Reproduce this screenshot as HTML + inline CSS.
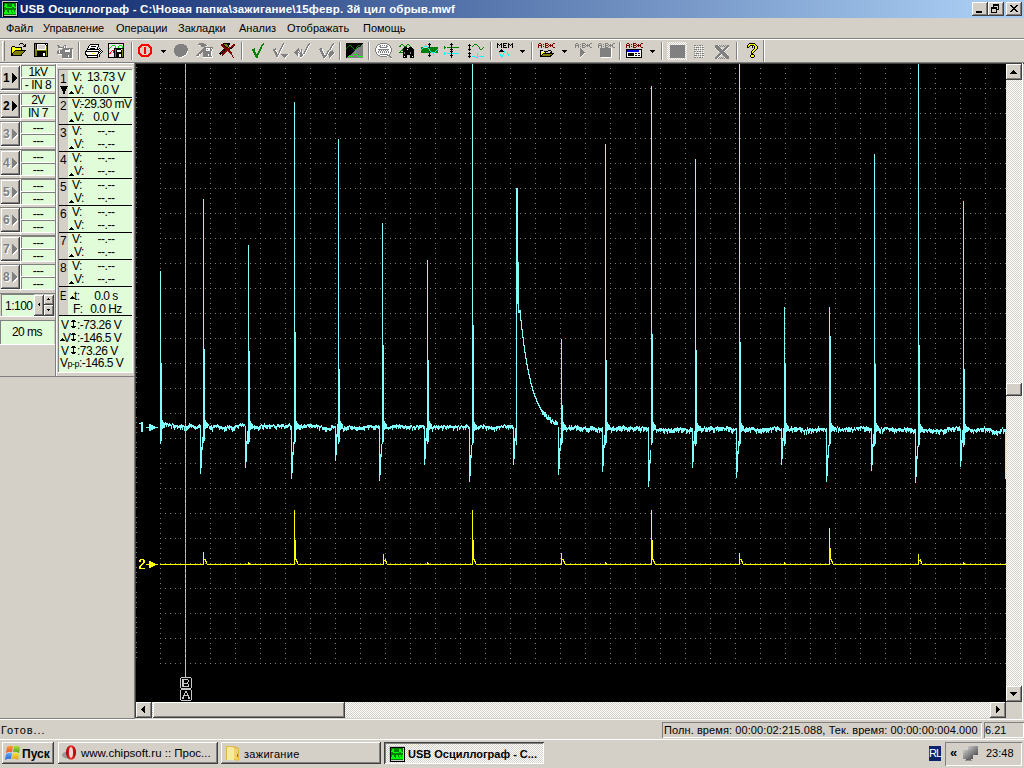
<!DOCTYPE html><html><head><meta charset="utf-8"><style>
*{box-sizing:border-box}
body{margin:0;width:1024px;height:768px;overflow:hidden;background:#d4d0c8;font-family:"Liberation Sans",sans-serif;font-size:11px;color:#000;position:relative}
.a{position:absolute}
.t{position:absolute;white-space:nowrap;line-height:13px}
.p{font-size:12px;line-height:20px;letter-spacing:-0.5px}
.rz{box-shadow:inset -1px -1px #404040,inset 1px 1px #fff,inset -2px -2px #808080,inset 2px 2px #d4d0c8;background:#d4d0c8}
.rz2{box-shadow:inset -1px -1px #404040,inset 1px 1px #d4d0c8,inset -2px -2px #808080,inset 2px 2px #fff;background:#d4d0c8}
.sk{box-shadow:inset 1px 1px #808080,inset -1px -1px #fff}
.dith{background-color:#e6e3de;background-image:repeating-conic-gradient(#fff 0 25%,#d4d0c8 0 50%);background-size:2px 2px}
</style></head><body><div class="a" style="left:0;top:0;width:1024px;height:18px;background:linear-gradient(to right,#0a246a 0px,#a6caf0 972px)"></div><svg class="a" style="left:0;top:0" width="20" height="18" shape-rendering="crispEdges"><path fill="#c8c8c8" d="M2 1h16v1h-16zM2 2h1v1h-1zM2 3h1v1h-1zM16 3h1v1h-1zM2 4h1v1h-1zM16 4h1v1h-1zM2 5h1v1h-1zM16 5h1v1h-1zM2 6h1v1h-1zM16 6h1v1h-1zM2 7h1v1h-1zM16 7h1v1h-1zM2 8h1v1h-1zM16 8h1v1h-1zM2 9h1v1h-1zM16 9h1v1h-1zM2 10h1v1h-1zM16 10h1v1h-1zM2 11h1v1h-1zM16 11h1v1h-1zM2 12h1v1h-1zM16 12h1v1h-1zM2 13h1v1h-1zM16 13h1v1h-1zM2 14h1v1h-1zM16 14h1v1h-1zM2 15h1v1h-1zM4 15h13v1h-13zM2 16h1v1h-1z"/><path fill="#000" d="M3 2h15v1h-15zM3 3h1v1h-1zM17 3h1v1h-1zM3 4h1v1h-1zM17 4h1v1h-1zM3 5h1v1h-1zM17 5h1v1h-1zM3 6h1v1h-1zM17 6h1v1h-1zM3 7h1v1h-1zM17 7h1v1h-1zM3 8h1v1h-1zM17 8h1v1h-1zM3 9h1v1h-1zM17 9h1v1h-1zM3 10h1v1h-1zM17 10h1v1h-1zM3 11h1v1h-1zM17 11h1v1h-1zM3 12h1v1h-1zM17 12h1v1h-1zM3 13h1v1h-1zM17 13h1v1h-1zM3 14h1v1h-1zM17 14h1v1h-1zM3 15h1v1h-1zM17 15h1v1h-1zM3 16h15v1h-15z"/><path fill="#008000" d="M4 3h12v1h-12zM4 4h1v1h-1zM7 4h5v1h-5zM14 4h2v1h-2zM4 5h1v1h-1zM7 5h5v1h-5zM14 5h2v1h-2zM7 6h5v1h-5zM15 6h1v1h-1zM4 7h2v1h-2zM12 7h2v1h-2zM4 8h12v1h-12zM4 9h12v1h-12zM4 10h1v1h-1zM7 10h2v1h-2zM11 10h1v1h-1zM14 10h1v1h-1zM4 11h1v1h-1zM7 11h2v1h-2zM11 11h1v1h-1zM14 11h1v1h-1zM8 12h1v1h-1zM12 12h1v1h-1zM4 14h12v1h-12z"/><path fill="#00ff00" d="M5 4h2v1h-2zM12 4h2v1h-2zM5 5h2v1h-2zM12 5h2v1h-2zM4 6h3v1h-3zM12 6h3v1h-3zM6 7h6v1h-6zM14 7h2v1h-2zM5 10h2v1h-2zM9 10h2v1h-2zM12 10h2v1h-2zM15 10h1v1h-1zM5 11h2v1h-2zM9 11h2v1h-2zM12 11h2v1h-2zM15 11h1v1h-1zM4 12h4v1h-4zM9 12h3v1h-3zM13 12h3v1h-3zM4 13h12v1h-12z"/></svg><div class="t" style="left:20px;top:3px;color:#fff;font-weight:bold;font-size:11.5px;letter-spacing:0.17px">USB Осциллограф - C:\Новая папка\зажигание\15февр. 3й цил обрыв.mwf</div><div class="a rz" style="left:972px;top:2px;width:16px;height:14px"></div><div class="a rz" style="left:988px;top:2px;width:16px;height:14px"></div><div class="a rz" style="left:1006px;top:2px;width:16px;height:14px"></div><svg class="a" style="left:0;top:0" width="1024" height="18" shape-rendering="crispEdges"><path fill="#000" d="M976 11h6v2h-6zM993 4h6v2h-6z M998 6h1v4h-1z M996 9h2v1h-2z M993 6h1v1h-1zM991 7h6v2h-6z M991 9h1v4h-1z M996 9h1v4h-1z M991 12h6v1h-6zM1010 5h2v1h-2z M1016 5h2v1h-2z M1011 6h2v1h-2z M1015 6h2v1h-2z M1012 7h4v1h-4z M1013 8h2v1h-2z M1012 9h4v1h-4z M1011 10h2v1h-2z M1015 10h2v1h-2z M1010 11h2v1h-2z M1016 11h2v1h-2z"/></svg><div class="t" style="left:6px;top:22px">Файл</div><div class="t" style="left:43px;top:22px">Управление</div><div class="t" style="left:116px;top:22px">Операции</div><div class="t" style="left:178px;top:22px">Закладки</div><div class="t" style="left:239px;top:22px">Анализ</div><div class="t" style="left:287px;top:22px">Отображать</div><div class="t" style="left:363px;top:22px">Помощь</div><div class="a" style="left:0;top:38px;width:1024px;height:1px;background:#808080"></div><div class="a" style="left:0;top:39px;width:1024px;height:1px;background:#fff"></div><svg class="a" style="left:0;top:0" width="1024" height="64" shape-rendering="crispEdges"><rect x="2" y="41" width="1" height="20" fill="#fff"/><rect x="4" y="41" width="1" height="20" fill="#808080"/><rect x="3" y="41" width="1" height="1" fill="#fff"/><path fill="#000" d="M20 43h3v1h-3zM19 44h1v1h-1zM23 44h1v1h-1zM25 44h1v1h-1zM24 45h2v1h-2zM12 46h3v1h-3zM23 46h3v1h-3zM11 47h1v1h-1zM15 47h7v1h-7zM11 48h1v1h-1zM21 48h1v1h-1zM11 49h1v1h-1zM21 49h1v1h-1zM11 50h1v1h-1zM15 50h11v1h-11zM11 51h1v1h-1zM14 51h1v1h-1zM24 51h1v1h-1zM11 52h1v1h-1zM13 52h1v1h-1zM23 52h1v1h-1zM11 53h2v1h-2zM22 53h1v1h-1zM11 54h2v1h-2zM21 54h1v1h-1zM11 55h11v1h-11z"/><path fill="#ffff00" d="M12 47h3v1h-3zM12 48h1v1h-1zM14 48h1v1h-1zM16 48h1v1h-1zM18 48h1v1h-1zM20 48h1v1h-1zM12 49h1v1h-1zM14 49h1v1h-1zM16 49h1v1h-1zM18 49h1v1h-1zM20 49h1v1h-1zM12 50h3v1h-3zM12 51h2v1h-2zM12 52h1v1h-1z"/><path fill="#fff" d="M13 48h1v1h-1zM15 48h1v1h-1zM17 48h1v1h-1zM19 48h1v1h-1zM13 49h1v1h-1zM15 49h1v1h-1zM17 49h1v1h-1zM19 49h1v1h-1z"/><path fill="#808000" d="M15 51h9v1h-9zM14 52h9v1h-9zM13 53h9v1h-9zM13 54h8v1h-8z"/><path fill="#000" d="M34 43h14v1h-14zM34 44h1v1h-1zM36 44h1v1h-1zM45 44h1v1h-1zM47 44h1v1h-1zM34 45h1v1h-1zM36 45h1v1h-1zM46 45h2v1h-2zM34 46h1v1h-1zM36 46h1v1h-1zM47 46h1v1h-1zM34 47h1v1h-1zM36 47h1v1h-1zM47 47h1v1h-1zM34 48h1v1h-1zM36 48h1v1h-1zM47 48h1v1h-1zM34 49h1v1h-1zM47 49h1v1h-1zM34 50h1v1h-1zM47 50h1v1h-1zM34 51h1v1h-1zM37 51h9v1h-9zM47 51h1v1h-1zM34 52h1v1h-1zM37 52h9v1h-9zM47 52h1v1h-1zM34 53h1v1h-1zM37 53h6v1h-6zM45 53h1v1h-1zM47 53h1v1h-1zM34 54h1v1h-1zM37 54h6v1h-6zM45 54h1v1h-1zM47 54h1v1h-1zM34 55h1v1h-1zM37 55h6v1h-6zM45 55h1v1h-1zM47 55h1v1h-1zM34 56h14v1h-14z"/><path fill="#808000" d="M35 44h1v1h-1zM35 45h1v1h-1zM35 46h1v1h-1zM46 46h1v1h-1zM35 47h1v1h-1zM46 47h1v1h-1zM35 48h1v1h-1zM46 48h1v1h-1zM35 49h2v1h-2zM46 49h1v1h-1zM35 50h12v1h-12zM35 51h2v1h-2zM46 51h1v1h-1zM35 52h2v1h-2zM46 52h1v1h-1zM35 53h2v1h-2zM46 53h1v1h-1zM35 54h2v1h-2zM46 54h1v1h-1zM35 55h2v1h-2zM46 55h1v1h-1z"/><path fill="#fff" d="M37 44h8v1h-8zM46 44h1v1h-1zM37 45h1v1h-1zM45 45h1v1h-1zM37 46h1v1h-1zM45 46h1v1h-1zM37 47h1v1h-1zM45 47h1v1h-1zM37 48h1v1h-1zM45 48h1v1h-1zM37 49h9v1h-9zM43 53h2v1h-2zM43 54h2v1h-2zM43 55h2v1h-2z"/><path fill="#d4d0c8" d="M38 45h7v1h-7zM38 46h7v1h-7zM38 47h7v1h-7zM38 48h7v1h-7z"/><path fill="#808080" d="M57 45h2v1h-2zM64 45h2v1h-2zM58 46h2v1h-2zM63 46h1v1h-1zM65 46h1v1h-1zM58 47h6v1h-6zM65 47h1v1h-1zM63 48h10v1h-10zM62 49h7v1h-7zM70 49h2v1h-2zM58 50h1v1h-1zM60 50h5v1h-5zM70 50h2v1h-2zM57 51h2v1h-2zM60 51h5v1h-5zM70 51h2v1h-2zM57 52h2v1h-2zM60 52h12v1h-12zM57 53h15v1h-15zM62 54h10v1h-10zM62 55h6v1h-6zM69 55h3v1h-3zM62 56h6v1h-6zM69 56h3v1h-3zM62 57h10v1h-10z"/><path fill="#fff" d="M64 46h1v1h-1zM66 46h1v1h-1zM64 47h1v1h-1zM66 47h1v1h-1zM59 48h3v1h-3zM69 49h1v1h-1zM72 49h1v1h-1zM65 50h5v1h-5zM72 50h1v1h-1zM59 51h1v1h-1zM65 51h5v1h-5zM72 51h1v1h-1zM59 52h1v1h-1zM72 52h1v1h-1zM72 53h1v1h-1zM58 54h4v1h-4zM72 54h1v1h-1zM68 55h1v1h-1zM72 55h1v1h-1zM68 56h1v1h-1zM72 56h1v1h-1zM72 57h1v1h-1zM63 58h10v1h-10z"/><rect x="78" y="42" width="1" height="18" fill="#808080"/><rect x="79" y="42" width="1" height="18" fill="#fff"/><path fill="#000" d="M90 44h9v1h-9zM89 45h1v1h-1zM98 45h1v1h-1zM88 46h1v1h-1zM91 46h5v1h-5zM98 46h1v1h-1zM88 47h1v1h-1zM97 47h1v1h-1zM87 48h1v1h-1zM90 48h5v1h-5zM97 48h1v1h-1zM99 48h1v1h-1zM87 49h12v1h-12zM100 49h1v1h-1zM86 50h1v1h-1zM99 50h1v1h-1zM101 50h1v1h-1zM85 51h14v1h-14zM100 51h1v1h-1zM102 51h1v1h-1zM85 52h1v1h-1zM98 52h2v1h-2zM101 52h1v1h-1zM85 53h1v1h-1zM98 53h1v1h-1zM100 53h1v1h-1zM85 54h2v1h-2zM97 54h1v1h-1zM99 54h1v1h-1zM86 55h12v1h-12zM99 55h1v1h-1zM87 56h1v1h-1zM97 56h1v1h-1zM99 56h1v1h-1zM87 57h11v1h-11z"/><path fill="#fff" d="M90 45h8v1h-8zM89 46h2v1h-2zM96 46h2v1h-2zM89 47h8v1h-8zM88 48h2v1h-2zM95 48h2v1h-2zM98 48h1v1h-1zM99 49h1v1h-1zM101 49h1v1h-1zM87 50h12v1h-12zM100 50h1v1h-1zM99 51h1v1h-1zM101 51h1v1h-1zM86 52h12v1h-12zM100 52h1v1h-1zM86 53h6v1h-6zM95 53h3v1h-3zM99 53h1v1h-1zM87 54h10v1h-10zM98 54h1v1h-1zM98 55h1v1h-1zM88 56h9v1h-9z"/><path fill="#ffff00" d="M92 53h3v1h-3z"/><path fill="#000" d="M108 43h16v1h-16zM108 44h1v1h-1zM123 44h1v1h-1zM108 45h1v1h-1zM123 45h1v1h-1zM108 46h1v1h-1zM123 46h1v1h-1zM108 47h1v1h-1zM123 47h1v1h-1zM108 48h1v1h-1zM114 48h10v1h-10zM108 49h1v1h-1zM114 49h1v1h-1zM116 49h5v1h-5zM123 49h1v1h-1zM108 50h1v1h-1zM114 50h1v1h-1zM116 50h1v1h-1zM121 50h1v1h-1zM123 50h1v1h-1zM108 51h1v1h-1zM114 51h1v1h-1zM116 51h1v1h-1zM121 51h1v1h-1zM123 51h1v1h-1zM108 52h1v1h-1zM114 52h1v1h-1zM116 52h6v1h-6zM123 52h1v1h-1zM108 53h1v1h-1zM114 53h1v1h-1zM116 53h6v1h-6zM123 53h1v1h-1zM108 54h1v1h-1zM114 54h1v1h-1zM116 54h3v1h-3zM121 54h1v1h-1zM123 54h1v1h-1zM108 55h1v1h-1zM114 55h1v1h-1zM116 55h3v1h-3zM121 55h1v1h-1zM123 55h1v1h-1zM108 56h1v1h-1zM114 56h1v1h-1zM116 56h3v1h-3zM121 56h1v1h-1zM123 56h1v1h-1zM108 57h16v1h-16z"/><path fill="#f0e6f0" d="M109 44h14v1h-14zM109 45h3v1h-3zM115 45h4v1h-4zM122 45h1v1h-1zM109 46h2v1h-2zM112 46h3v1h-3zM116 46h2v1h-2zM119 46h3v1h-3zM109 47h1v1h-1zM111 47h4v1h-4zM116 47h2v1h-2zM119 47h3v1h-3zM110 48h4v1h-4zM109 49h5v1h-5zM109 50h3v1h-3zM109 51h2v1h-2zM112 51h1v1h-1zM109 52h1v1h-1zM111 52h2v1h-2zM111 53h3v1h-3zM109 54h5v1h-5zM109 55h5v1h-5zM109 56h5v1h-5z"/><path fill="#00e000" d="M112 45h3v1h-3zM119 45h3v1h-3zM111 46h1v1h-1zM115 46h1v1h-1zM118 46h1v1h-1zM122 46h1v1h-1zM110 47h1v1h-1zM115 47h1v1h-1zM118 47h1v1h-1zM122 47h1v1h-1zM109 48h1v1h-1z"/><path fill="#808000" d="M115 49h1v1h-1zM122 49h1v1h-1zM115 50h1v1h-1zM122 50h1v1h-1zM115 51h1v1h-1zM122 51h1v1h-1zM115 52h1v1h-1zM122 52h1v1h-1zM115 53h1v1h-1zM122 53h1v1h-1zM115 54h1v1h-1zM122 54h1v1h-1zM115 55h1v1h-1zM122 55h1v1h-1zM115 56h1v1h-1zM122 56h1v1h-1z"/><path fill="#fff" d="M121 49h1v1h-1zM117 50h4v1h-4zM117 51h4v1h-4zM119 54h2v1h-2zM119 55h2v1h-2zM119 56h2v1h-2z"/><path fill="#ff0000" d="M112 50h2v1h-2zM113 51h1v1h-1zM113 52h1v1h-1z"/><path fill="#ff0000" d="M111 51h1v1h-1zM110 52h1v1h-1zM109 53h2v1h-2z"/><rect x="131" y="42" width="1" height="18" fill="#808080"/><rect x="132" y="42" width="1" height="18" fill="#fff"/><path fill="#ff0000" d="M141 44h8v1h-8zM140 45h10v1h-10zM139 46h3v1h-3zM148 46h3v1h-3zM138 47h3v1h-3zM144 47h2v1h-2zM149 47h3v1h-3zM138 48h2v1h-2zM144 48h2v1h-2zM150 48h2v1h-2zM138 49h2v1h-2zM144 49h2v1h-2zM150 49h2v1h-2zM138 50h2v1h-2zM144 50h2v1h-2zM150 50h2v1h-2zM138 51h2v1h-2zM144 51h2v1h-2zM150 51h2v1h-2zM138 52h2v1h-2zM144 52h2v1h-2zM150 52h2v1h-2zM138 53h3v1h-3zM144 53h2v1h-2zM149 53h3v1h-3zM139 54h3v1h-3zM148 54h3v1h-3zM140 55h10v1h-10zM141 56h8v1h-8z"/><path fill="#000" d="M161 50h5v1h-5z M162 51h3v1h-3z M163 52h1v1h-1z"/><path fill="#808080" d="M178 44h6v1h-6zM176 45h10v1h-10zM175 46h12v1h-12zM175 47h12v1h-12zM174 48h14v1h-14zM174 49h14v1h-14zM174 50h14v1h-14zM174 51h13v1h-13zM174 52h13v1h-13zM175 53h11v1h-11zM175 54h11v1h-11zM176 55h8v1h-8zM178 56h4v1h-4z"/><path fill="#fff" d="M187 51h1v1h-1zM187 52h1v1h-1zM186 53h1v1h-1zM186 54h1v1h-1zM184 55h2v1h-2zM182 56h2v1h-2zM180 57h2v1h-2z"/><path fill="#808080" d="M199 43h5v1h-5zM198 44h8v1h-8zM201 45h6v1h-6zM201 46h4v1h-4zM204 47h9v1h-9zM203 48h3v1h-3zM210 48h1v1h-1zM212 48h1v1h-1zM202 49h4v1h-4zM207 49h1v1h-1zM210 49h2v1h-2zM201 50h5v1h-5zM210 50h2v1h-2zM200 51h11v1h-11zM199 52h3v1h-3zM203 52h8v1h-8zM198 53h3v1h-3zM203 53h8v1h-8zM197 54h2v1h-2zM203 54h5v1h-5zM209 54h2v1h-2zM196 55h3v1h-3zM203 55h5v1h-5zM209 55h2v1h-2zM203 56h9v1h-9z"/><path fill="#fff" d="M199 45h1v1h-1zM207 45h1v1h-1zM206 46h1v1h-1zM206 48h4v1h-4zM211 48h1v1h-1zM206 49h1v1h-1zM208 49h2v1h-2zM212 49h1v1h-1zM206 50h4v1h-4zM212 50h1v1h-1zM211 51h1v1h-1zM211 52h1v1h-1zM211 53h1v1h-1zM199 54h1v1h-1zM208 54h1v1h-1zM211 54h1v1h-1zM199 55h1v1h-1zM208 55h1v1h-1zM211 55h1v1h-1zM197 56h2v1h-2zM212 56h1v1h-1zM203 57h10v1h-10z"/><path fill="#000" d="M223 43h7v1h-7zM223 44h1v1h-1zM227 44h3v1h-3zM224 45h1v1h-1zM228 45h1v1h-1zM225 46h1v1h-1zM228 46h1v1h-1zM226 47h2v1h-2zM232 47h1v1h-1zM230 48h2v1h-2zM223 49h2v1h-2zM229 49h1v1h-1zM222 50h1v1h-1zM224 50h1v1h-1zM221 51h1v1h-1zM223 51h1v1h-1zM220 52h1v1h-1zM222 52h1v1h-1zM219 53h3v1h-3zM220 54h1v1h-1z"/><path fill="#800000" d="M221 44h2v1h-2zM233 44h2v1h-2zM221 45h3v1h-3zM232 45h3v1h-3zM222 46h3v1h-3zM231 46h3v1h-3zM223 47h3v1h-3zM229 47h3v1h-3zM224 48h6v1h-6zM225 49h4v1h-4zM223 50h1v1h-1zM225 50h5v1h-5zM222 51h1v1h-1zM224 51h3v1h-3zM228 51h3v1h-3zM221 52h1v1h-1zM223 52h3v1h-3zM229 52h3v1h-3zM222 53h3v1h-3zM230 53h2v1h-2zM222 54h2v1h-2zM231 54h1v1h-1zM222 55h1v1h-1zM232 55h1v1h-1zM232 56h1v1h-1zM233 57h1v1h-1z"/><path fill="#808000" d="M224 44h3v1h-3zM225 45h3v1h-3zM226 46h2v1h-2z"/><path fill="#c0c000" d="M228 47h1v1h-1z"/><rect x="241" y="42" width="1" height="18" fill="#808080"/><rect x="242" y="42" width="1" height="18" fill="#fff"/><path fill="#008000" d="M263 43h1v1h-1zM262 44h2v1h-2zM261 45h2v1h-2zM261 46h1v1h-1zM260 47h2v1h-2zM254 48h1v1h-1zM260 48h2v1h-2zM252 49h3v1h-3zM259 49h2v1h-2zM252 50h3v1h-3zM259 50h2v1h-2zM253 51h2v1h-2zM258 51h2v1h-2zM253 52h3v1h-3zM258 52h2v1h-2zM254 53h2v1h-2zM257 53h2v1h-2zM254 54h5v1h-5zM255 55h3v1h-3zM255 56h3v1h-3zM256 57h2v1h-2z"/><path fill="#808080" d="M283 43h1v1h-1zM282 44h2v1h-2zM282 45h1v1h-1zM281 46h2v1h-2zM281 47h1v1h-1zM275 48h1v1h-1zM280 48h2v1h-2zM273 49h3v1h-3zM280 49h1v1h-1zM273 50h2v1h-2zM279 50h2v1h-2zM274 51h2v1h-2zM279 51h1v1h-1zM274 52h3v1h-3zM279 52h1v1h-1zM275 53h2v1h-2zM278 53h1v1h-1zM275 54h4v1h-4zM281 54h7v1h-7zM276 55h2v1h-2zM282 55h5v1h-5zM276 56h2v1h-2zM283 56h3v1h-3zM284 57h1v1h-1z"/><path fill="#fff" d="M284 44h1v1h-1zM283 45h1v1h-1zM283 46h1v1h-1zM282 47h1v1h-1zM282 48h1v1h-1zM281 49h1v1h-1zM275 50h2v1h-2zM281 50h1v1h-1zM276 51h1v1h-1zM280 51h1v1h-1zM277 52h1v1h-1zM280 52h1v1h-1zM277 53h1v1h-1zM279 53h1v1h-1zM279 54h1v1h-1zM288 54h1v1h-1zM278 55h1v1h-1zM287 55h1v1h-1zM278 56h1v1h-1zM286 56h1v1h-1zM277 57h1v1h-1zM285 57h1v1h-1zM285 58h1v1h-1z"/><path fill="#808080" d="M309 43h1v1h-1zM308 44h2v1h-2zM307 45h2v1h-2zM307 46h1v1h-1zM306 47h2v1h-2zM298 48h1v1h-1zM306 48h1v1h-1zM297 49h2v1h-2zM301 49h1v1h-1zM305 49h2v1h-2zM296 50h4v1h-4zM301 50h1v1h-1zM305 50h1v1h-1zM295 51h3v1h-3zM299 51h1v1h-1zM301 51h1v1h-1zM304 51h2v1h-2zM294 52h5v1h-5zM300 52h2v1h-2zM304 52h1v1h-1zM295 53h3v1h-3zM299 53h3v1h-3zM303 53h2v1h-2zM296 54h2v1h-2zM300 54h3v1h-3zM297 55h1v1h-1zM300 55h3v1h-3zM300 56h2v1h-2z"/><path fill="#fff" d="M310 44h1v1h-1zM309 45h1v1h-1zM308 46h1v1h-1zM308 47h1v1h-1zM307 48h1v1h-1zM307 49h1v1h-1zM300 50h1v1h-1zM306 50h1v1h-1zM298 51h1v1h-1zM300 51h1v1h-1zM302 51h1v1h-1zM306 51h1v1h-1zM299 52h1v1h-1zM302 52h1v1h-1zM305 52h1v1h-1zM298 53h1v1h-1zM302 53h1v1h-1zM305 53h1v1h-1zM298 54h2v1h-2zM303 54h2v1h-2zM298 55h1v1h-1zM303 55h1v1h-1zM298 56h1v1h-1zM302 56h1v1h-1zM300 57h2v1h-2z"/><path fill="#808080" d="M333 43h1v1h-1zM332 44h2v1h-2zM331 45h2v1h-2zM331 46h1v1h-1zM330 47h2v1h-2zM320 48h2v1h-2zM330 48h1v1h-1zM319 49h3v1h-3zM329 49h2v1h-2zM320 50h2v1h-2zM328 50h1v1h-1zM332 50h1v1h-1zM320 51h3v1h-3zM327 51h2v1h-2zM330 51h3v1h-3zM321 52h2v1h-2zM327 52h1v1h-1zM329 52h5v1h-5zM321 53h3v1h-3zM326 53h2v1h-2zM329 53h5v1h-5zM322 54h2v1h-2zM326 54h1v1h-1zM328 54h5v1h-5zM322 55h5v1h-5zM329 55h3v1h-3zM323 56h3v1h-3zM329 56h2v1h-2zM323 57h2v1h-2zM329 57h1v1h-1z"/><path fill="#fff" d="M334 44h1v1h-1zM333 45h1v1h-1zM332 46h1v1h-1zM332 47h1v1h-1zM331 48h1v1h-1zM322 49h1v1h-1zM331 49h1v1h-1zM322 50h1v1h-1zM330 50h1v1h-1zM323 51h1v1h-1zM329 51h1v1h-1zM323 52h1v1h-1zM328 52h1v1h-1zM324 53h1v1h-1zM328 53h1v1h-1zM334 53h1v1h-1zM324 54h1v1h-1zM327 54h1v1h-1zM333 54h1v1h-1zM327 55h1v1h-1zM332 55h1v1h-1zM326 56h1v1h-1zM331 56h1v1h-1zM325 57h1v1h-1zM330 57h1v1h-1zM324 58h1v1h-1zM330 58h1v1h-1z"/><rect x="339" y="42" width="1" height="18" fill="#808080"/><rect x="340" y="42" width="1" height="18" fill="#fff"/><path fill="#000" d="M346 43h17v1h-17zM346 44h16v1h-16zM346 45h15v1h-15zM346 46h14v1h-14zM346 47h12v1h-12zM346 48h11v1h-11zM346 49h10v1h-10zM346 50h9v1h-9zM346 51h8v1h-8zM346 52h7v1h-7zM346 53h6v1h-6zM346 54h5v1h-5zM346 55h3v1h-3zM346 56h2v1h-2zM346 57h1v1h-1z"/><path fill="#808080" d="M362 44h1v1h-1zM361 45h2v1h-2zM360 46h3v1h-3zM358 47h5v1h-5zM357 48h6v1h-6zM356 49h7v1h-7zM355 50h8v1h-8zM354 51h9v1h-9zM353 52h10v1h-10zM352 53h11v1h-11zM351 54h12v1h-12zM349 55h14v1h-14zM348 56h15v1h-15zM347 57h16v1h-16z"/><path fill="#008000" d="M349 45h2v1h-2zM358 45h2v1h-2zM348 46h1v1h-1zM351 46h1v1h-1zM357 46h1v1h-1zM360 46h1v1h-1zM347 47h1v1h-1zM352 47h1v1h-1zM356 47h1v1h-1zM346 48h1v1h-1zM353 48h1v1h-1zM356 48h1v1h-1zM354 49h2v1h-2z"/><path fill="#00ff00" d="M355 50h1v1h-1zM355 51h1v1h-1zM355 52h1v1h-1zM355 53h1v1h-1zM354 54h1v1h-1zM356 54h1v1h-1zM353 55h1v1h-1zM357 55h1v1h-1zM348 56h5v1h-5zM358 56h5v1h-5z"/><rect x="368" y="42" width="1" height="18" fill="#808080"/><rect x="369" y="42" width="1" height="18" fill="#fff"/><path fill="#808080" d="M380 43h7v1h-7zM378 44h2v1h-2zM387 44h2v1h-2zM377 45h1v1h-1zM380 45h1v1h-1zM382 45h1v1h-1zM384 45h1v1h-1zM386 45h1v1h-1zM389 45h1v1h-1zM376 46h1v1h-1zM379 46h2v1h-2zM386 46h2v1h-2zM390 46h1v1h-1zM376 47h1v1h-1zM380 47h7v1h-7zM390 47h1v1h-1zM375 48h1v1h-1zM391 48h1v1h-1zM375 49h1v1h-1zM378 49h11v1h-11zM391 49h1v1h-1zM375 50h1v1h-1zM379 50h1v1h-1zM381 50h1v1h-1zM383 50h1v1h-1zM385 50h1v1h-1zM387 50h1v1h-1zM391 50h1v1h-1zM375 51h1v1h-1zM378 51h1v1h-1zM380 51h1v1h-1zM382 51h1v1h-1zM384 51h1v1h-1zM386 51h1v1h-1zM388 51h1v1h-1zM391 51h1v1h-1zM376 52h1v1h-1zM378 52h1v1h-1zM380 52h1v1h-1zM382 52h1v1h-1zM384 52h1v1h-1zM386 52h1v1h-1zM388 52h1v1h-1zM390 52h1v1h-1zM376 53h1v1h-1zM390 53h1v1h-1zM377 54h1v1h-1zM380 54h8v1h-8zM389 54h1v1h-1zM378 55h2v1h-2zM387 55h3v1h-3zM380 56h7v1h-7zM389 56h2v1h-2zM390 57h2v1h-2z"/><path fill="#fff" d="M380 44h7v1h-7zM378 45h2v1h-2zM381 45h1v1h-1zM383 45h1v1h-1zM385 45h1v1h-1zM387 45h2v1h-2zM377 46h2v1h-2zM381 46h5v1h-5zM388 46h2v1h-2zM377 47h3v1h-3zM387 47h3v1h-3zM376 48h15v1h-15zM376 49h2v1h-2zM389 49h2v1h-2zM376 50h3v1h-3zM380 50h1v1h-1zM382 50h1v1h-1zM384 50h1v1h-1zM386 50h1v1h-1zM388 50h3v1h-3zM376 51h2v1h-2zM379 51h1v1h-1zM381 51h1v1h-1zM383 51h1v1h-1zM385 51h1v1h-1zM387 51h1v1h-1zM389 51h2v1h-2zM377 52h1v1h-1zM379 52h1v1h-1zM381 52h1v1h-1zM383 52h1v1h-1zM385 52h1v1h-1zM387 52h1v1h-1zM389 52h1v1h-1zM377 53h13v1h-13zM378 54h2v1h-2zM388 54h1v1h-1zM380 55h7v1h-7zM387 56h1v1h-1zM391 58h1v1h-1z"/><path fill="#008000" d="M401 44h2v1h-2zM407 44h2v1h-2zM400 45h1v1h-1zM403 45h1v1h-1zM406 45h1v1h-1zM409 45h1v1h-1zM399 46h2v1h-2zM404 46h3v1h-3zM410 46h1v1h-1zM402 49h1v1h-1zM401 50h2v1h-2zM400 51h1v1h-1zM399 52h4v1h-4z"/><path fill="#000" d="M404 47h3v1h-3zM409 47h3v1h-3zM403 48h10v1h-10zM403 49h4v1h-4zM408 49h6v1h-6zM403 50h11v1h-11zM403 51h11v1h-11zM403 52h1v1h-1zM405 52h5v1h-5zM411 52h3v1h-3zM403 53h1v1h-1zM405 53h5v1h-5zM411 53h3v1h-3zM403 54h11v1h-11zM403 55h4v1h-4zM410 55h4v1h-4zM403 56h1v1h-1zM405 56h2v1h-2zM410 56h2v1h-2zM413 56h1v1h-1zM403 57h4v1h-4zM410 57h4v1h-4z"/><path fill="#fff" d="M407 49h1v1h-1zM404 56h1v1h-1zM412 56h1v1h-1z"/><path fill="#808080" d="M404 52h1v1h-1zM410 52h1v1h-1zM404 53h1v1h-1zM410 53h1v1h-1z"/><path fill="#000" d="M429 43h1v1h-1zM428 44h3v1h-3zM429 45h1v1h-1zM429 46h1v1h-1zM429 47h1v1h-1zM429 51h1v1h-1zM429 53h1v1h-1zM429 54h1v1h-1zM428 55h3v1h-3zM429 56h1v1h-1z"/><path fill="#00ffff" d="M425 44h1v1h-1zM425 45h1v1h-1zM424 46h1v1h-1zM426 46h1v1h-1zM423 47h1v1h-1zM427 47h1v1h-1zM422 48h1v1h-1zM428 48h1v1h-1zM421 49h1v1h-1zM429 49h1v1h-1zM437 49h1v1h-1zM429 50h1v1h-1zM436 50h1v1h-1zM430 51h1v1h-1zM435 51h1v1h-1zM431 52h4v1h-4zM433 53h1v1h-1zM433 54h1v1h-1z"/><path fill="#008000" d="M421 47h2v1h-2zM428 47h1v1h-1zM430 47h8v1h-8zM421 48h1v1h-1zM423 48h5v1h-5zM429 48h9v1h-9zM422 49h7v1h-7zM430 49h7v1h-7zM421 50h8v1h-8zM430 50h6v1h-6zM437 50h1v1h-1zM421 51h8v1h-8zM431 51h4v1h-4zM436 51h2v1h-2zM421 52h10v1h-10zM435 52h3v1h-3z"/><path fill="#000" d="M451 43h1v1h-1zM450 44h3v1h-3zM451 45h1v1h-1zM451 46h1v1h-1zM451 47h1v1h-1zM451 48h1v1h-1zM450 49h3v1h-3zM451 50h1v1h-1zM450 51h3v1h-3zM451 52h1v1h-1zM451 53h1v1h-1zM451 54h1v1h-1zM450 55h3v1h-3zM451 56h1v1h-1zM451 57h1v1h-1z"/><path fill="#008000" d="M444 46h1v1h-1zM444 47h2v1h-2zM447 47h4v1h-4zM452 47h7v1h-7zM444 48h1v1h-1z"/><path fill="#00ffff" d="M444 52h1v1h-1zM444 53h2v1h-2zM447 53h4v1h-4zM452 53h7v1h-7zM444 54h1v1h-1z"/><path fill="#000" d="M469 44h1v1h-1zM468 45h3v1h-3zM469 46h1v1h-1zM469 47h1v1h-1zM469 48h1v1h-1zM468 49h3v1h-3zM469 50h1v1h-1zM469 52h1v1h-1zM468 53h3v1h-3zM469 54h1v1h-1zM469 55h1v1h-1zM468 56h3v1h-3zM469 57h1v1h-1z"/><path fill="#008000" d="M474 44h3v1h-3zM473 45h1v1h-1zM477 45h1v1h-1zM472 46h1v1h-1zM478 46h1v1h-1zM479 47h1v1h-1zM483 47h1v1h-1zM479 48h1v1h-1zM482 48h1v1h-1zM480 49h2v1h-2z"/><path fill="#00ffff" d="M477 53h1v1h-1zM477 54h1v1h-1zM477 55h1v1h-1zM472 56h3v1h-3zM477 56h1v1h-1zM479 56h5v1h-5zM475 57h3v1h-3z"/><rect x="490" y="42" width="1" height="18" fill="#808080"/><rect x="491" y="42" width="1" height="18" fill="#fff"/><path fill="#000" d="M497 43h1v1h-1zM501 43h1v1h-1zM503 43h4v1h-4zM508 43h1v1h-1zM512 43h1v1h-1zM497 44h2v1h-2zM500 44h2v1h-2zM503 44h1v1h-1zM508 44h2v1h-2zM511 44h2v1h-2zM497 45h1v1h-1zM499 45h1v1h-1zM501 45h1v1h-1zM503 45h3v1h-3zM508 45h1v1h-1zM510 45h1v1h-1zM512 45h1v1h-1zM497 46h1v1h-1zM501 46h1v1h-1zM503 46h1v1h-1zM508 46h1v1h-1zM512 46h1v1h-1zM497 47h1v1h-1zM501 47h1v1h-1zM503 47h4v1h-4zM508 47h1v1h-1zM512 47h1v1h-1zM501 49h1v1h-1zM500 50h3v1h-3zM499 51h5v1h-5z"/><path fill="#00ffff" d="M504 51h1v1h-1zM499 52h1v1h-1zM504 52h1v1h-1zM507 52h1v1h-1zM499 53h1v1h-1zM503 53h1v1h-1zM507 53h1v1h-1zM500 54h1v1h-1zM503 54h1v1h-1zM508 54h1v1h-1zM500 55h1v1h-1zM502 55h1v1h-1zM508 55h1v1h-1zM501 56h2v1h-2zM501 57h1v1h-1z"/><path fill="#000" d="M520 50h5v1h-5z M521 51h3v1h-3z M522 52h1v1h-1z"/><rect x="531" y="42" width="1" height="18" fill="#808080"/><rect x="532" y="42" width="1" height="18" fill="#fff"/><path fill="#800000" d="M539 43h2v1h-2zM545 43h3v1h-3zM553 43h2v1h-2zM538 44h1v1h-1zM541 44h1v1h-1zM543 44h1v1h-1zM545 44h1v1h-1zM548 44h1v1h-1zM550 44h1v1h-1zM552 44h1v1h-1zM538 45h4v1h-4zM545 45h3v1h-3zM549 45h4v1h-4zM538 46h1v1h-1zM541 46h1v1h-1zM543 46h1v1h-1zM545 46h1v1h-1zM548 46h1v1h-1zM550 46h1v1h-1zM552 46h1v1h-1zM538 47h1v1h-1zM541 47h1v1h-1zM545 47h3v1h-3zM553 47h2v1h-2z"/><path fill="#000" d="M540 50h3v1h-3zM548 50h3v1h-3zM540 51h1v1h-1zM544 51h4v1h-4zM551 51h1v1h-1zM540 52h1v1h-1zM545 52h1v1h-1zM550 52h2v1h-2zM540 53h1v1h-1zM543 53h11v1h-11zM540 54h1v1h-1zM542 54h1v1h-1zM552 54h1v1h-1zM540 55h2v1h-2zM550 55h2v1h-2zM540 56h11v1h-11z"/><path fill="#ffff00" d="M541 51h1v1h-1zM543 51h1v1h-1zM542 52h1v1h-1zM544 52h1v1h-1zM541 53h2v1h-2zM541 54h1v1h-1z"/><path fill="#fff" d="M542 51h1v1h-1zM541 52h1v1h-1zM543 52h1v1h-1z"/><path fill="#808000" d="M543 54h9v1h-9zM542 55h8v1h-8z"/><path fill="#000" d="M562 50h5v1h-5z M563 51h3v1h-3z M564 52h1v1h-1z"/><path fill="#808080" d="M576 43h2v1h-2zM582 43h3v1h-3zM590 43h2v1h-2zM575 44h1v1h-1zM578 44h1v1h-1zM580 44h1v1h-1zM582 44h1v1h-1zM585 44h1v1h-1zM587 44h1v1h-1zM589 44h1v1h-1zM575 45h4v1h-4zM582 45h3v1h-3zM586 45h4v1h-4zM575 46h1v1h-1zM578 46h1v1h-1zM580 46h1v1h-1zM582 46h1v1h-1zM585 46h1v1h-1zM587 46h1v1h-1zM589 46h1v1h-1zM575 47h1v1h-1zM578 47h1v1h-1zM582 47h3v1h-3zM590 47h2v1h-2z"/><path fill="#808080" d="M580 48h1v1h-1zM580 49h2v1h-2zM580 50h3v1h-3zM580 51h4v1h-4zM580 52h5v1h-5zM580 53h4v1h-4zM580 54h3v1h-3zM580 55h2v1h-2zM580 56h1v1h-1z"/><path fill="#fff" d="M584 53h1v1h-1zM583 54h1v1h-1zM582 55h1v1h-1zM581 56h1v1h-1zM580 57h1v1h-1z"/><path fill="#808080" d="M599 43h2v1h-2zM605 43h3v1h-3zM613 43h2v1h-2zM598 44h1v1h-1zM601 44h1v1h-1zM603 44h1v1h-1zM605 44h1v1h-1zM608 44h1v1h-1zM610 44h1v1h-1zM612 44h1v1h-1zM598 45h4v1h-4zM605 45h3v1h-3zM609 45h4v1h-4zM598 46h1v1h-1zM601 46h1v1h-1zM603 46h1v1h-1zM605 46h1v1h-1zM608 46h1v1h-1zM610 46h1v1h-1zM612 46h1v1h-1zM598 47h1v1h-1zM601 47h1v1h-1zM605 47h3v1h-3zM613 47h2v1h-2z"/><rect x="600" y="48" width="11" height="9" fill="#808080"/><rect x="601" y="57" width="11" height="1" fill="#fff"/><rect x="611" y="48" width="1" height="9" fill="#fff"/><rect x="619" y="42" width="1" height="18" fill="#808080"/><rect x="620" y="42" width="1" height="18" fill="#fff"/><path fill="#800000" d="M627 43h2v1h-2zM633 43h3v1h-3zM641 43h2v1h-2zM626 44h1v1h-1zM629 44h1v1h-1zM631 44h1v1h-1zM633 44h1v1h-1zM636 44h1v1h-1zM638 44h1v1h-1zM640 44h1v1h-1zM626 45h4v1h-4zM633 45h3v1h-3zM637 45h4v1h-4zM626 46h1v1h-1zM629 46h1v1h-1zM631 46h1v1h-1zM633 46h1v1h-1zM636 46h1v1h-1zM638 46h1v1h-1zM640 46h1v1h-1zM626 47h1v1h-1zM629 47h1v1h-1zM633 47h3v1h-3zM641 47h2v1h-2z"/><path fill="#000" d="M626 49h16v1h-16zM626 50h1v1h-1zM641 50h1v1h-1zM626 51h1v1h-1zM641 51h1v1h-1zM626 52h1v1h-1zM641 52h1v1h-1zM626 53h1v1h-1zM628 53h6v1h-6zM635 53h2v1h-2zM638 53h2v1h-2zM641 53h1v1h-1zM626 54h1v1h-1zM628 54h6v1h-6zM641 54h1v1h-1zM626 55h1v1h-1zM628 55h6v1h-6zM635 55h2v1h-2zM638 55h2v1h-2zM641 55h1v1h-1zM626 56h1v1h-1zM641 56h1v1h-1zM626 57h16v1h-16z"/><path fill="#0000ff" d="M627 50h12v1h-12zM627 51h12v1h-12z"/><path fill="#fffff0" d="M639 50h2v1h-2zM639 51h2v1h-2zM627 52h14v1h-14zM627 53h1v1h-1zM634 53h1v1h-1zM637 53h1v1h-1zM640 53h1v1h-1zM627 54h1v1h-1zM634 54h7v1h-7zM627 55h1v1h-1zM634 55h1v1h-1zM637 55h1v1h-1zM640 55h1v1h-1zM627 56h14v1h-14z"/><path fill="#000" d="M650 50h5v1h-5z M651 51h3v1h-3z M652 52h1v1h-1z"/><rect x="661" y="42" width="1" height="18" fill="#808080"/><rect x="662" y="42" width="1" height="18" fill="#fff"/><path fill="#fff" d="M667 42h1v1h-1zM669 42h1v1h-1zM671 42h1v1h-1zM673 42h1v1h-1zM675 42h1v1h-1zM677 42h1v1h-1zM679 42h1v1h-1zM681 42h1v1h-1zM683 42h1v1h-1zM685 42h1v1h-1zM668 43h1v1h-1zM670 43h1v1h-1zM672 43h1v1h-1zM674 43h1v1h-1zM676 43h1v1h-1zM678 43h1v1h-1zM680 43h1v1h-1zM682 43h1v1h-1zM684 43h1v1h-1zM686 43h1v1h-1zM667 44h1v1h-1zM669 44h1v1h-1zM671 44h1v1h-1zM673 44h1v1h-1zM675 44h1v1h-1zM677 44h1v1h-1zM679 44h1v1h-1zM681 44h1v1h-1zM683 44h1v1h-1zM685 44h1v1h-1zM668 45h1v1h-1zM686 45h1v1h-1zM667 46h1v1h-1zM669 46h1v1h-1zM685 46h1v1h-1zM668 47h1v1h-1zM686 47h1v1h-1zM667 48h1v1h-1zM669 48h1v1h-1zM685 48h1v1h-1zM668 49h1v1h-1zM686 49h1v1h-1zM667 50h1v1h-1zM669 50h1v1h-1zM685 50h1v1h-1zM668 51h1v1h-1zM686 51h1v1h-1zM667 52h1v1h-1zM669 52h1v1h-1zM685 52h1v1h-1zM668 53h1v1h-1zM686 53h1v1h-1zM667 54h1v1h-1zM669 54h1v1h-1zM685 54h1v1h-1zM668 55h1v1h-1zM686 55h1v1h-1zM667 56h1v1h-1zM669 56h1v1h-1zM685 56h1v1h-1zM668 57h1v1h-1zM686 57h1v1h-1zM667 58h1v1h-1zM669 58h1v1h-1zM671 58h1v1h-1zM673 58h1v1h-1zM675 58h1v1h-1zM677 58h1v1h-1zM679 58h1v1h-1zM681 58h1v1h-1zM683 58h1v1h-1zM685 58h1v1h-1zM668 59h1v1h-1zM670 59h1v1h-1zM672 59h1v1h-1zM674 59h1v1h-1zM676 59h1v1h-1zM678 59h1v1h-1zM680 59h1v1h-1zM682 59h1v1h-1zM684 59h1v1h-1zM686 59h1v1h-1z"/><path fill="#808080" d="M670 45h15v1h-15zM670 46h15v1h-15zM670 47h15v1h-15zM670 48h15v1h-15zM670 49h15v1h-15zM670 50h15v1h-15zM670 51h15v1h-15zM670 52h15v1h-15zM670 53h15v1h-15zM670 54h15v1h-15zM670 55h15v1h-15zM670 56h15v1h-15zM670 57h15v1h-15z"/><path fill="#808080" d="M694 45h2v1h-2zM697 45h1v1h-1zM699 45h2v1h-2zM702 45h1v1h-1zM694 47h1v1h-1zM696 47h3v1h-3zM700 47h1v1h-1zM702 47h2v1h-2zM694 49h3v1h-3zM698 49h1v1h-1zM700 49h1v1h-1zM702 49h2v1h-2zM694 51h2v1h-2zM697 51h1v1h-1zM699 51h2v1h-2zM702 51h1v1h-1zM694 53h1v1h-1zM696 53h3v1h-3zM700 53h1v1h-1zM702 53h2v1h-2zM694 55h3v1h-3zM698 55h1v1h-1zM700 55h1v1h-1zM702 55h2v1h-2zM694 57h2v1h-2zM697 57h1v1h-1zM699 57h2v1h-2zM702 57h1v1h-1z"/><path fill="#fff" d="M695 46h1v1h-1zM697 46h1v1h-1zM699 46h1v1h-1zM701 46h1v1h-1zM703 46h1v1h-1zM695 48h1v1h-1zM697 48h1v1h-1zM699 48h1v1h-1zM701 48h1v1h-1zM703 48h1v1h-1zM695 50h1v1h-1zM697 50h1v1h-1zM699 50h1v1h-1zM701 50h1v1h-1zM703 50h1v1h-1zM695 52h1v1h-1zM697 52h1v1h-1zM699 52h1v1h-1zM701 52h1v1h-1zM703 52h1v1h-1zM695 54h1v1h-1zM697 54h1v1h-1zM699 54h1v1h-1zM701 54h1v1h-1zM703 54h1v1h-1zM695 56h1v1h-1zM697 56h1v1h-1zM699 56h1v1h-1zM701 56h1v1h-1zM703 56h1v1h-1z"/><path fill="#808080" d="M715 45h3v1h-3zM719 45h1v1h-1zM721 45h1v1h-1zM723 45h1v1h-1zM725 45h1v1h-1zM727 45h2v1h-2zM715 46h4v1h-4zM720 46h1v1h-1zM722 46h1v1h-1zM724 46h1v1h-1zM726 46h3v1h-3zM715 47h5v1h-5zM725 47h3v1h-3zM716 48h5v1h-5zM724 48h3v1h-3zM717 49h5v1h-5zM723 49h3v1h-3zM718 50h7v1h-7zM719 51h5v1h-5zM720 52h5v1h-5zM719 53h7v1h-7zM718 54h3v1h-3zM722 54h5v1h-5zM717 55h3v1h-3zM723 55h5v1h-5zM716 56h3v1h-3zM724 56h5v1h-5zM715 57h3v1h-3zM719 57h1v1h-1zM721 57h1v1h-1zM723 57h1v1h-1zM725 57h4v1h-4zM715 58h2v1h-2zM718 58h1v1h-1zM720 58h1v1h-1zM722 58h1v1h-1zM724 58h1v1h-1zM726 58h3v1h-3z"/><path fill="#fff" d="M718 45h1v1h-1zM728 47h1v1h-1zM715 48h1v1h-1zM721 48h1v1h-1zM727 48h1v1h-1zM726 49h1v1h-1zM725 50h1v1h-1zM718 51h1v1h-1zM724 51h1v1h-1zM721 54h1v1h-1zM727 54h1v1h-1zM720 55h1v1h-1zM719 56h1v1h-1zM718 57h1v1h-1zM724 57h1v1h-1zM717 58h1v1h-1z"/><rect x="736" y="42" width="1" height="18" fill="#808080"/><rect x="737" y="42" width="1" height="18" fill="#fff"/><path fill="#000" d="M749 43h6v1h-6zM748 44h1v1h-1zM755 44h1v1h-1zM747 45h1v1h-1zM750 45h4v1h-4zM756 45h1v1h-1zM747 46h1v1h-1zM749 46h1v1h-1zM752 46h1v1h-1zM754 46h1v1h-1zM757 46h1v1h-1zM747 47h2v1h-2zM752 47h1v1h-1zM754 47h1v1h-1zM757 47h1v1h-1zM754 48h1v1h-1zM757 48h1v1h-1zM753 49h1v1h-1zM756 49h1v1h-1zM752 50h1v1h-1zM755 50h1v1h-1zM751 51h1v1h-1zM754 51h1v1h-1zM751 52h1v1h-1zM753 52h1v1h-1zM751 53h2v1h-2zM751 54h3v1h-3zM750 55h1v1h-1zM754 55h1v1h-1zM750 56h1v1h-1zM754 56h1v1h-1zM751 57h3v1h-3z"/><path fill="#ffff00" d="M749 44h6v1h-6zM748 45h2v1h-2zM754 45h2v1h-2zM748 46h1v1h-1zM755 46h2v1h-2zM755 47h2v1h-2zM755 48h2v1h-2zM754 49h2v1h-2zM753 50h2v1h-2zM752 51h2v1h-2zM752 52h1v1h-1zM751 55h3v1h-3zM751 56h3v1h-3z"/><path fill="#fff" d="M751 46h1v1h-1z"/><rect x="763" y="40" width="1" height="22" fill="#808080"/><rect x="764" y="40" width="1" height="22" fill="#fff"/></svg><svg class="a" style="left:0;top:0" width="136" height="380" shape-rendering="crispEdges"><rect x="20" y="64" width="1" height="227" fill="#fff"/><rect x="1" y="66" width="19" height="24" fill="#404040"/><rect x="1" y="66" width="18" height="23" fill="#fff"/><rect x="2" y="67" width="17" height="22" fill="#808080"/><rect x="2" y="67" width="16" height="21" fill="#d4d0c8"/><rect x="0" y="90" width="55" height="1" fill="#fff"/><rect x="0" y="93" width="55" height="1" fill="#808080"/><rect x="21" y="65" width="34" height="12" fill="#808080"/><rect x="22" y="66" width="33" height="11" fill="#e0fcd8"/><rect x="21" y="77" width="34" height="1" fill="#fff"/><rect x="21" y="78" width="34" height="12" fill="#808080"/><rect x="22" y="79" width="33" height="11" fill="#e0fcd8"/><path fill="#000" d="M12 73h1v10h-1zM13 74h1v8h-1zM14 75h1v6h-1zM15 76h1v4h-1zM16 77h1v2h-1z"/><rect x="1" y="94" width="19" height="24" fill="#404040"/><rect x="1" y="94" width="18" height="23" fill="#fff"/><rect x="2" y="95" width="17" height="22" fill="#808080"/><rect x="2" y="95" width="16" height="21" fill="#d4d0c8"/><rect x="0" y="118" width="55" height="1" fill="#fff"/><rect x="0" y="121" width="55" height="1" fill="#808080"/><rect x="21" y="93" width="34" height="12" fill="#808080"/><rect x="22" y="94" width="33" height="11" fill="#e0fcd8"/><rect x="21" y="105" width="34" height="1" fill="#fff"/><rect x="21" y="106" width="34" height="12" fill="#808080"/><rect x="22" y="107" width="33" height="11" fill="#e0fcd8"/><path fill="#000" d="M12 101h1v10h-1zM13 102h1v8h-1zM14 103h1v6h-1zM15 104h1v4h-1zM16 105h1v2h-1z"/><rect x="1" y="122" width="19" height="24" fill="#404040"/><rect x="1" y="122" width="18" height="23" fill="#fff"/><rect x="2" y="123" width="17" height="22" fill="#808080"/><rect x="2" y="123" width="16" height="21" fill="#d4d0c8"/><rect x="0" y="146" width="55" height="1" fill="#fff"/><rect x="0" y="149" width="55" height="1" fill="#808080"/><rect x="21" y="121" width="34" height="12" fill="#808080"/><rect x="22" y="122" width="33" height="11" fill="#e0fcd8"/><rect x="21" y="133" width="34" height="1" fill="#fff"/><rect x="21" y="134" width="34" height="12" fill="#808080"/><rect x="22" y="135" width="33" height="11" fill="#e0fcd8"/><path fill="#fff" d="M13 130h1v10h-1zM14 131h1v8h-1zM15 132h1v6h-1zM16 133h1v4h-1zM17 134h1v2h-1z"/><path fill="#808080" d="M12 129h1v10h-1zM13 130h1v8h-1zM14 131h1v6h-1zM15 132h1v4h-1zM16 133h1v2h-1z"/><rect x="1" y="151" width="19" height="24" fill="#404040"/><rect x="1" y="151" width="18" height="23" fill="#fff"/><rect x="2" y="152" width="17" height="22" fill="#808080"/><rect x="2" y="152" width="16" height="21" fill="#d4d0c8"/><rect x="0" y="175" width="55" height="1" fill="#fff"/><rect x="0" y="178" width="55" height="1" fill="#808080"/><rect x="21" y="150" width="34" height="12" fill="#808080"/><rect x="22" y="151" width="33" height="11" fill="#e0fcd8"/><rect x="21" y="162" width="34" height="1" fill="#fff"/><rect x="21" y="163" width="34" height="12" fill="#808080"/><rect x="22" y="164" width="33" height="11" fill="#e0fcd8"/><path fill="#fff" d="M13 159h1v10h-1zM14 160h1v8h-1zM15 161h1v6h-1zM16 162h1v4h-1zM17 163h1v2h-1z"/><path fill="#808080" d="M12 158h1v10h-1zM13 159h1v8h-1zM14 160h1v6h-1zM15 161h1v4h-1zM16 162h1v2h-1z"/><rect x="1" y="180" width="19" height="24" fill="#404040"/><rect x="1" y="180" width="18" height="23" fill="#fff"/><rect x="2" y="181" width="17" height="22" fill="#808080"/><rect x="2" y="181" width="16" height="21" fill="#d4d0c8"/><rect x="0" y="204" width="55" height="1" fill="#fff"/><rect x="0" y="207" width="55" height="1" fill="#808080"/><rect x="21" y="179" width="34" height="12" fill="#808080"/><rect x="22" y="180" width="33" height="11" fill="#e0fcd8"/><rect x="21" y="191" width="34" height="1" fill="#fff"/><rect x="21" y="192" width="34" height="12" fill="#808080"/><rect x="22" y="193" width="33" height="11" fill="#e0fcd8"/><path fill="#fff" d="M13 188h1v10h-1zM14 189h1v8h-1zM15 190h1v6h-1zM16 191h1v4h-1zM17 192h1v2h-1z"/><path fill="#808080" d="M12 187h1v10h-1zM13 188h1v8h-1zM14 189h1v6h-1zM15 190h1v4h-1zM16 191h1v2h-1z"/><rect x="1" y="208" width="19" height="24" fill="#404040"/><rect x="1" y="208" width="18" height="23" fill="#fff"/><rect x="2" y="209" width="17" height="22" fill="#808080"/><rect x="2" y="209" width="16" height="21" fill="#d4d0c8"/><rect x="0" y="232" width="55" height="1" fill="#fff"/><rect x="0" y="235" width="55" height="1" fill="#808080"/><rect x="21" y="207" width="34" height="12" fill="#808080"/><rect x="22" y="208" width="33" height="11" fill="#e0fcd8"/><rect x="21" y="219" width="34" height="1" fill="#fff"/><rect x="21" y="220" width="34" height="12" fill="#808080"/><rect x="22" y="221" width="33" height="11" fill="#e0fcd8"/><path fill="#fff" d="M13 216h1v10h-1zM14 217h1v8h-1zM15 218h1v6h-1zM16 219h1v4h-1zM17 220h1v2h-1z"/><path fill="#808080" d="M12 215h1v10h-1zM13 216h1v8h-1zM14 217h1v6h-1zM15 218h1v4h-1zM16 219h1v2h-1z"/><rect x="1" y="237" width="19" height="24" fill="#404040"/><rect x="1" y="237" width="18" height="23" fill="#fff"/><rect x="2" y="238" width="17" height="22" fill="#808080"/><rect x="2" y="238" width="16" height="21" fill="#d4d0c8"/><rect x="0" y="261" width="55" height="1" fill="#fff"/><rect x="0" y="264" width="55" height="1" fill="#808080"/><rect x="21" y="236" width="34" height="12" fill="#808080"/><rect x="22" y="237" width="33" height="11" fill="#e0fcd8"/><rect x="21" y="248" width="34" height="1" fill="#fff"/><rect x="21" y="249" width="34" height="12" fill="#808080"/><rect x="22" y="250" width="33" height="11" fill="#e0fcd8"/><path fill="#fff" d="M13 245h1v10h-1zM14 246h1v8h-1zM15 247h1v6h-1zM16 248h1v4h-1zM17 249h1v2h-1z"/><path fill="#808080" d="M12 244h1v10h-1zM13 245h1v8h-1zM14 246h1v6h-1zM15 247h1v4h-1zM16 248h1v2h-1z"/><rect x="1" y="265" width="19" height="24" fill="#404040"/><rect x="1" y="265" width="18" height="23" fill="#fff"/><rect x="2" y="266" width="17" height="22" fill="#808080"/><rect x="2" y="266" width="16" height="21" fill="#d4d0c8"/><rect x="0" y="289" width="55" height="1" fill="#fff"/><rect x="21" y="264" width="34" height="12" fill="#808080"/><rect x="22" y="265" width="33" height="11" fill="#e0fcd8"/><rect x="21" y="276" width="34" height="1" fill="#fff"/><rect x="21" y="277" width="34" height="12" fill="#808080"/><rect x="22" y="278" width="33" height="11" fill="#e0fcd8"/><path fill="#fff" d="M13 273h1v10h-1zM14 274h1v8h-1zM15 275h1v6h-1zM16 276h1v4h-1zM17 277h1v2h-1z"/><path fill="#808080" d="M12 272h1v10h-1zM13 273h1v8h-1zM14 274h1v6h-1zM15 275h1v4h-1zM16 276h1v2h-1z"/><rect x="0" y="293" width="55" height="1" fill="#808080"/><rect x="1" y="294" width="33" height="22" fill="#808080"/><rect x="2" y="295" width="32" height="21" fill="#e0fcd8"/><rect x="34" y="295" width="10" height="21" fill="#404040"/><rect x="34" y="295" width="9" height="20" fill="#fff"/><rect x="35" y="296" width="8" height="19" fill="#808080"/><rect x="35" y="296" width="7" height="18" fill="#d4d0c8"/><rect x="44" y="295" width="10" height="10" fill="#404040"/><rect x="44" y="295" width="9" height="9" fill="#fff"/><rect x="45" y="296" width="8" height="8" fill="#808080"/><rect x="45" y="296" width="7" height="7" fill="#d4d0c8"/><rect x="44" y="305" width="10" height="11" fill="#404040"/><rect x="44" y="305" width="9" height="10" fill="#fff"/><rect x="45" y="306" width="8" height="9" fill="#808080"/><rect x="45" y="306" width="7" height="8" fill="#d4d0c8"/><path fill="#000" d="M39 303h1v3h-1z M38 304h1v1h-1z M48 298h1v1h-1z M47 299h3v1h-3z M47 309h3v1h-3z M48 310h1v1h-1z"/><rect x="0" y="316" width="55" height="1" fill="#fff"/><rect x="0" y="320" width="55" height="1" fill="#808080"/><rect x="0" y="321" width="54" height="23" fill="#e0fcd8"/><rect x="0" y="321" width="1" height="23" fill="#808080"/><rect x="0" y="344" width="55" height="1" fill="#fff"/><rect x="55" y="64" width="1" height="312" fill="#808080"/><rect x="56" y="64" width="1" height="312" fill="#fff"/><rect x="58" y="69" width="75" height="304" fill="#fff"/><rect x="58" y="69" width="74" height="303" fill="#808080"/><rect x="59" y="70" width="73" height="302" fill="#e0fcd8"/><rect x="59" y="70" width="9" height="245" fill="#d4d0c8"/><rect x="57" y="66" width="76" height="1" fill="#fff"/><rect x="59" y="97" width="73" height="1" fill="#000"/><rect x="59" y="124" width="73" height="1" fill="#000"/><rect x="59" y="151" width="73" height="1" fill="#000"/><rect x="59" y="178" width="73" height="1" fill="#000"/><rect x="59" y="205" width="73" height="1" fill="#000"/><rect x="59" y="232" width="73" height="1" fill="#000"/><rect x="59" y="259" width="73" height="1" fill="#000"/><rect x="59" y="286" width="73" height="1" fill="#000"/><rect x="59" y="315" width="73" height="1" fill="#000"/><path fill="#000" d="M71 91h1v1h-1z M70 92h3v1h-3z M69 93h5v1h-5z"/><path fill="#000" d="M71 119h1v1h-1z M70 120h3v1h-3z M69 121h5v1h-5z"/><path fill="#000" d="M71 146h1v1h-1z M70 147h3v1h-3z M69 148h5v1h-5z"/><path fill="#000" d="M71 173h1v1h-1z M70 174h3v1h-3z M69 175h5v1h-5z"/><path fill="#000" d="M71 200h1v1h-1z M70 201h3v1h-3z M69 202h5v1h-5z"/><path fill="#000" d="M71 227h1v1h-1z M70 228h3v1h-3z M69 229h5v1h-5z"/><path fill="#000" d="M71 254h1v1h-1z M70 255h3v1h-3z M69 256h5v1h-5z"/><path fill="#000" d="M71 281h1v1h-1z M70 282h3v1h-3z M69 283h5v1h-5z"/><path fill="#000" d="M60 86h8v1h-8z M61 87h6v2h-6z M62 89h4v2h-4z M63 91h2v3h-2z"/><path fill="#000" d="M62 338h1v1h-1z M61 339h3v1h-3z M60 340h5v1h-5z"/><path fill="#000" d="M72 296h1v1h-1z M71 297h3v1h-3z M70 298h5v1h-5z"/><path fill="#000" d="M72 320h3v1h-3z M71 321h5v1h-5z M73 322h1v5h-1z M71 326h5v1h-5z M72 327h3v1h-3z"/><path fill="#000" d="M72 333h3v1h-3z M71 334h5v1h-5z M73 335h1v5h-1z M71 339h5v1h-5z M72 340h3v1h-3z"/><path fill="#000" d="M72 346h3v1h-3z M71 347h5v1h-5z M73 348h1v5h-1z M71 352h5v1h-5z M72 353h3v1h-3z"/></svg><div class="t" style="left:3px;top:68px;font-weight:bold;font-size:12px;line-height:20px">1</div><div class="t p" style="left:-12px;top:62px;width:100px;text-align:center;">1kV</div><div class="t p" style="left:-12px;top:75px;width:100px;text-align:center;">- IN 8</div><div class="t" style="left:3px;top:96px;font-weight:bold;font-size:12px;line-height:20px">2</div><div class="t p" style="left:-12px;top:90px;width:100px;text-align:center;">2V</div><div class="t p" style="left:-12px;top:103px;width:100px;text-align:center;">IN 7</div><div class="t" style="left:4px;top:125px;font-weight:bold;font-size:12px;line-height:20px;color:#fff">3</div><div class="t" style="left:3px;top:124px;font-weight:bold;font-size:12px;line-height:20px;color:#808080">3</div><div class="t p" style="left:-12px;top:118px;width:100px;text-align:center;">---</div><div class="t p" style="left:-12px;top:131px;width:100px;text-align:center;">---</div><div class="t" style="left:4px;top:154px;font-weight:bold;font-size:12px;line-height:20px;color:#fff">4</div><div class="t" style="left:3px;top:153px;font-weight:bold;font-size:12px;line-height:20px;color:#808080">4</div><div class="t p" style="left:-12px;top:147px;width:100px;text-align:center;">---</div><div class="t p" style="left:-12px;top:160px;width:100px;text-align:center;">---</div><div class="t" style="left:4px;top:183px;font-weight:bold;font-size:12px;line-height:20px;color:#fff">5</div><div class="t" style="left:3px;top:182px;font-weight:bold;font-size:12px;line-height:20px;color:#808080">5</div><div class="t p" style="left:-12px;top:176px;width:100px;text-align:center;">---</div><div class="t p" style="left:-12px;top:189px;width:100px;text-align:center;">---</div><div class="t" style="left:4px;top:211px;font-weight:bold;font-size:12px;line-height:20px;color:#fff">6</div><div class="t" style="left:3px;top:210px;font-weight:bold;font-size:12px;line-height:20px;color:#808080">6</div><div class="t p" style="left:-12px;top:204px;width:100px;text-align:center;">---</div><div class="t p" style="left:-12px;top:217px;width:100px;text-align:center;">---</div><div class="t" style="left:4px;top:240px;font-weight:bold;font-size:12px;line-height:20px;color:#fff">7</div><div class="t" style="left:3px;top:239px;font-weight:bold;font-size:12px;line-height:20px;color:#808080">7</div><div class="t p" style="left:-12px;top:233px;width:100px;text-align:center;">---</div><div class="t p" style="left:-12px;top:246px;width:100px;text-align:center;">---</div><div class="t" style="left:4px;top:268px;font-weight:bold;font-size:12px;line-height:20px;color:#fff">8</div><div class="t" style="left:3px;top:267px;font-weight:bold;font-size:12px;line-height:20px;color:#808080">8</div><div class="t p" style="left:-12px;top:261px;width:100px;text-align:center;">---</div><div class="t p" style="left:-12px;top:274px;width:100px;text-align:center;">---</div><div class="t p" style="left:5px;top:296px;">1:100</div><div class="t p" style="left:-23px;top:322px;width:100px;text-align:center;">20 ms</div><div class="t p" style="left:60px;top:69px;">1</div><div class="t p" style="left:72px;top:67px;">V:</div><div class="t p" style="left:74px;top:80px;">V:</div><div class="t p" style="left:56px;top:67px;width:100px;text-align:center;">13.73 V</div><div class="t p" style="left:56px;top:80px;width:100px;text-align:center;">0.0 V</div><div class="t p" style="left:60px;top:96px;">2</div><div class="t p" style="left:72px;top:94px;">V:</div><div class="t p" style="left:74px;top:107px;">V:</div><div class="t p" style="left:56px;top:94px;width:100px;text-align:center;">-29.30 mV</div><div class="t p" style="left:56px;top:107px;width:100px;text-align:center;">0.0 V</div><div class="t p" style="left:60px;top:123px;">3</div><div class="t p" style="left:72px;top:121px;">V:</div><div class="t p" style="left:74px;top:134px;">V:</div><div class="t p" style="left:56px;top:121px;width:100px;text-align:center;">--.--</div><div class="t p" style="left:56px;top:134px;width:100px;text-align:center;">--.--</div><div class="t p" style="left:60px;top:150px;">4</div><div class="t p" style="left:72px;top:148px;">V:</div><div class="t p" style="left:74px;top:161px;">V:</div><div class="t p" style="left:56px;top:148px;width:100px;text-align:center;">--.--</div><div class="t p" style="left:56px;top:161px;width:100px;text-align:center;">--.--</div><div class="t p" style="left:60px;top:177px;">5</div><div class="t p" style="left:72px;top:175px;">V:</div><div class="t p" style="left:74px;top:188px;">V:</div><div class="t p" style="left:56px;top:175px;width:100px;text-align:center;">--.--</div><div class="t p" style="left:56px;top:188px;width:100px;text-align:center;">--.--</div><div class="t p" style="left:60px;top:204px;">6</div><div class="t p" style="left:72px;top:202px;">V:</div><div class="t p" style="left:74px;top:215px;">V:</div><div class="t p" style="left:56px;top:202px;width:100px;text-align:center;">--.--</div><div class="t p" style="left:56px;top:215px;width:100px;text-align:center;">--.--</div><div class="t p" style="left:60px;top:231px;">7</div><div class="t p" style="left:72px;top:229px;">V:</div><div class="t p" style="left:74px;top:242px;">V:</div><div class="t p" style="left:56px;top:229px;width:100px;text-align:center;">--.--</div><div class="t p" style="left:56px;top:242px;width:100px;text-align:center;">--.--</div><div class="t p" style="left:60px;top:258px;">8</div><div class="t p" style="left:72px;top:256px;">V:</div><div class="t p" style="left:74px;top:269px;">V:</div><div class="t p" style="left:56px;top:256px;width:100px;text-align:center;">--.--</div><div class="t p" style="left:56px;top:269px;width:100px;text-align:center;">--.--</div><div class="t p" style="left:60px;top:286px;transform:scaleX(0.8);transform-origin:0 0">E</div><div class="t p" style="left:74px;top:286px;">t:</div><div class="t p" style="left:56px;top:286px;width:100px;text-align:center;">0.0 s</div><div class="t p" style="left:73px;top:299px;">F:</div><div class="t p" style="left:56px;top:299px;width:100px;text-align:center;">0.0 Hz</div><div class="t p" style="left:61px;top:315px;">V</div><div class="t p" style="left:77px;top:315px;">:-73.26 V</div><div class="t p" style="left:63px;top:328px;">V</div><div class="t p" style="left:77px;top:328px;">:-146.5 V</div><div class="t p" style="left:61px;top:341px;">V</div><div class="t p" style="left:77px;top:341px;">:73.26 V</div><div class="t p" style="left:60px;top:353px;">V<span style="font-size:9px">p-p</span>:-146.5 V</div><div class="a" style="left:0;top:376px;width:134px;height:1px;background:#808080"></div><div class="a" style="left:0;top:62px;width:1024px;height:1px;background:#808080"></div><div class="a" style="left:0;top:63px;width:136px;height:1px;background:#fff"></div><div class="a" style="left:134px;top:63px;width:890px;height:1px;background:#404040"></div><div class="a" style="left:134px;top:62px;width:1px;height:657px;background:#808080"></div><div class="a" style="left:135px;top:63px;width:1px;height:655px;background:#404040"></div><div class="a" style="left:0;top:718px;width:135px;height:1px;background:#808080"></div><div class="a" style="left:1022px;top:63px;width:1px;height:656px;background:#fff"></div><div class="a" style="left:0;top:719px;width:1024px;height:1px;background:#fff"></div><svg class="a" style="left:0;top:0" width="1024" height="768" shape-rendering="crispEdges"><rect x="136" y="64" width="870" height="638" fill="#000"/><defs><pattern id="pc" x="160" y="68" width="25" height="5" patternUnits="userSpaceOnUse"><rect width="1" height="1" fill="#808080"/></pattern><pattern id="pr" x="160" y="88" width="5" height="25" patternUnits="userSpaceOnUse"><rect width="1" height="1" fill="#808080"/></pattern><pattern id="pl" x="136" y="67" width="5" height="25" patternUnits="userSpaceOnUse"><rect width="1" height="1" y="0" fill="#808080"/><rect width="1" height="1" y="5" fill="#808080"/><rect width="1" height="1" y="10" fill="#808080"/><rect width="1" height="1" y="15" fill="#808080"/></pattern></defs><rect x="160" y="68" width="826" height="596" fill="url(#pc)"/><rect x="160" y="88" width="846" height="576" fill="url(#pr)"/><rect x="136" y="67" width="1" height="591" fill="url(#pl)"/><path d="M185.5 64V663" stroke="#c0c0c0" stroke-width="1" stroke-dasharray="4 1"/><rect x="185" y="663" width="1" height="14" fill="#c0c0c0"/><path fill="#c8c8c8" d="M181 677h10v1h-10zM180 678h1v1h-1zM191 678h1v1h-1zM180 679h1v1h-1zM182 679h6v1h-6zM191 679h1v1h-1zM180 680h1v1h-1zM182 680h2v1h-2zM188 680h1v1h-1zM191 680h1v1h-1zM180 681h1v1h-1zM182 681h2v1h-2zM188 681h1v1h-1zM191 681h1v1h-1zM180 682h1v1h-1zM182 682h2v1h-2zM187 682h1v1h-1zM191 682h1v1h-1zM180 683h1v1h-1zM182 683h6v1h-6zM191 683h1v1h-1zM180 684h1v1h-1zM182 684h2v1h-2zM188 684h1v1h-1zM191 684h1v1h-1zM180 685h1v1h-1zM182 685h2v1h-2zM188 685h1v1h-1zM191 685h1v1h-1zM180 686h1v1h-1zM182 686h7v1h-7zM191 686h1v1h-1zM180 687h1v1h-1zM191 687h1v1h-1zM181 688h10v1h-10zM181 689h10v1h-10zM180 690h1v1h-1zM191 690h1v1h-1zM180 691h1v1h-1zM185 691h2v1h-2zM191 691h1v1h-1zM180 692h1v1h-1zM185 692h2v1h-2zM191 692h1v1h-1zM180 693h1v1h-1zM184 693h1v1h-1zM187 693h1v1h-1zM191 693h1v1h-1zM180 694h1v1h-1zM184 694h1v1h-1zM187 694h1v1h-1zM191 694h1v1h-1zM180 695h1v1h-1zM183 695h6v1h-6zM191 695h1v1h-1zM180 696h1v1h-1zM183 696h1v1h-1zM188 696h1v1h-1zM191 696h1v1h-1zM180 697h1v1h-1zM182 697h2v1h-2zM188 697h2v1h-2zM191 697h1v1h-1zM180 698h1v1h-1zM182 698h2v1h-2zM188 698h2v1h-2zM191 698h1v1h-1zM180 699h1v1h-1zM191 699h1v1h-1zM181 700h10v1h-10z"/><path fill="#80ffff" d="M160 271h1v173h-1zM161 363h1v78h-1zM162 420h1v9h-1zM163 422h1v6h-1zM164 423h1v5h-1zM165 422h1v3h-1zM166 423h1v4h-1zM167 423h1v2h-1zM168 424h1v3h-1zM169 423h1v3h-1zM170 424h1v2h-1zM171 425h1v4h-1zM172 423h1v2h-1zM173 424h1v4h-1zM174 425h1v5h-1zM175 425h1v3h-1zM176 425h1v2h-1zM177 425h1v4h-1zM178 426h1v2h-1zM179 425h1v3h-1zM180 425h1v5h-1zM181 424h1v4h-1zM182 425h1v5h-1zM183 425h1v2h-1zM184 426h1v5h-1zM185 425h1v2h-1zM186 426h1v5h-1zM187 426h1v4h-1zM188 425h1v4h-1zM189 423h1v5h-1zM190 424h1v3h-1zM191 424h1v4h-1zM192 425h1v2h-1zM193 425h1v3h-1zM194 426h1v3h-1zM195 426h1v4h-1zM196 427h1v2h-1zM197 426h1v3h-1zM198 425h1v3h-1zM199 424h1v4h-1zM200 425h1v49h-1zM201 447h1v21h-1zM202 437h1v13h-1zM203 199h1v244h-1zM204 349h1v92h-1zM205 420h1v9h-1zM206 422h1v6h-1zM207 423h1v5h-1zM208 424h1v2h-1zM209 426h1v3h-1zM210 426h1v4h-1zM211 425h1v5h-1zM212 427h1v5h-1zM213 425h1v3h-1zM214 425h1v3h-1zM215 425h1v2h-1zM216 425h1v3h-1zM217 424h1v3h-1zM218 425h1v3h-1zM219 426h1v4h-1zM220 426h1v3h-1zM221 426h1v3h-1zM222 427h1v3h-1zM223 427h1v2h-1zM224 427h1v5h-1zM225 426h1v5h-1zM226 427h1v4h-1zM227 425h1v3h-1zM228 426h1v3h-1zM229 425h1v5h-1zM230 426h1v2h-1zM231 426h1v4h-1zM232 427h1v5h-1zM233 427h1v4h-1zM234 426h1v5h-1zM235 425h1v3h-1zM236 425h1v2h-1zM237 425h1v3h-1zM238 425h1v4h-1zM239 424h1v2h-1zM240 423h1v3h-1zM241 424h1v3h-1zM242 423h1v3h-1zM243 424h1v3h-1zM244 424h1v2h-1zM245 426h1v42h-1zM246 441h1v21h-1zM247 431h1v13h-1zM248 245h1v199h-1zM249 351h1v91h-1zM250 421h1v9h-1zM251 423h1v6h-1zM252 424h1v5h-1zM253 426h1v2h-1zM254 425h1v5h-1zM255 426h1v3h-1zM256 426h1v3h-1zM257 426h1v3h-1zM258 427h1v4h-1zM259 426h1v4h-1zM260 425h1v4h-1zM261 424h1v2h-1zM262 425h1v4h-1zM263 425h1v5h-1zM264 423h1v4h-1zM265 425h1v3h-1zM266 425h1v4h-1zM267 425h1v4h-1zM268 425h1v2h-1zM269 424h1v5h-1zM270 425h1v4h-1zM271 425h1v2h-1zM272 425h1v2h-1zM273 424h1v2h-1zM274 425h1v3h-1zM275 426h1v3h-1zM276 426h1v4h-1zM277 424h1v3h-1zM278 424h1v3h-1zM279 425h1v3h-1zM280 425h1v2h-1zM281 424h1v5h-1zM282 424h1v3h-1zM283 424h1v3h-1zM284 426h1v3h-1zM285 425h1v3h-1zM286 425h1v3h-1zM287 425h1v3h-1zM288 424h1v3h-1zM289 423h1v3h-1zM290 425h1v5h-1zM291 426h1v53h-1zM292 452h1v21h-1zM293 442h1v13h-1zM294 102h1v342h-1zM295 332h1v110h-1zM296 421h1v9h-1zM297 423h1v6h-1zM298 424h1v5h-1zM299 425h1v5h-1zM300 425h1v5h-1zM301 424h1v4h-1zM302 426h1v3h-1zM303 425h1v3h-1zM304 424h1v4h-1zM305 425h1v3h-1zM306 425h1v3h-1zM307 424h1v2h-1zM308 424h1v3h-1zM309 424h1v4h-1zM310 424h1v3h-1zM311 424h1v4h-1zM312 425h1v3h-1zM313 425h1v2h-1zM314 425h1v3h-1zM315 425h1v3h-1zM316 424h1v3h-1zM317 425h1v4h-1zM318 425h1v2h-1zM319 426h1v5h-1zM320 426h1v2h-1zM321 425h1v2h-1zM322 427h1v3h-1zM323 427h1v3h-1zM324 427h1v3h-1zM325 427h1v5h-1zM326 427h1v5h-1zM327 428h1v2h-1zM328 428h1v2h-1zM329 428h1v3h-1zM330 428h1v3h-1zM331 425h1v5h-1zM332 425h1v3h-1zM333 426h1v3h-1zM334 426h1v2h-1zM335 426h1v35h-1zM336 434h1v21h-1zM337 424h1v13h-1zM338 139h1v305h-1zM339 369h1v73h-1zM340 421h1v9h-1zM341 423h1v6h-1zM342 424h1v5h-1zM343 428h1v4h-1zM344 426h1v5h-1zM345 427h1v3h-1zM346 427h1v4h-1zM347 426h1v4h-1zM348 426h1v4h-1zM349 425h1v2h-1zM350 426h1v3h-1zM351 426h1v4h-1zM352 426h1v4h-1zM353 427h1v2h-1zM354 426h1v3h-1zM355 427h1v3h-1zM356 427h1v4h-1zM357 427h1v4h-1zM358 427h1v3h-1zM359 426h1v4h-1zM360 427h1v3h-1zM361 427h1v3h-1zM362 427h1v3h-1zM363 426h1v4h-1zM364 426h1v5h-1zM365 426h1v2h-1zM366 426h1v2h-1zM367 425h1v3h-1zM368 425h1v5h-1zM369 425h1v3h-1zM370 425h1v2h-1zM371 425h1v3h-1zM372 426h1v2h-1zM373 426h1v4h-1zM374 426h1v4h-1zM375 425h1v5h-1zM376 425h1v3h-1zM377 426h1v2h-1zM378 425h1v4h-1zM379 426h1v55h-1zM380 454h1v21h-1zM381 444h1v13h-1zM382 223h1v221h-1zM383 345h1v97h-1zM384 421h1v9h-1zM385 423h1v6h-1zM386 424h1v5h-1zM387 427h1v2h-1zM388 427h1v3h-1zM389 427h1v2h-1zM390 426h1v3h-1zM391 426h1v2h-1zM392 425h1v5h-1zM393 425h1v3h-1zM394 425h1v3h-1zM395 425h1v3h-1zM396 424h1v5h-1zM397 425h1v2h-1zM398 425h1v4h-1zM399 424h1v4h-1zM400 425h1v4h-1zM401 425h1v2h-1zM402 425h1v3h-1zM403 426h1v3h-1zM404 426h1v3h-1zM405 425h1v3h-1zM406 426h1v4h-1zM407 426h1v3h-1zM408 426h1v3h-1zM409 426h1v4h-1zM410 425h1v3h-1zM411 425h1v2h-1zM412 427h1v4h-1zM413 426h1v2h-1zM414 426h1v4h-1zM415 427h1v3h-1zM416 425h1v3h-1zM417 425h1v2h-1zM418 426h1v4h-1zM419 425h1v4h-1zM420 425h1v3h-1zM421 425h1v3h-1zM422 425h1v2h-1zM423 425h1v4h-1zM424 426h1v39h-1zM425 438h1v21h-1zM426 428h1v13h-1zM427 260h1v184h-1zM428 360h1v82h-1zM429 421h1v9h-1zM430 423h1v6h-1zM431 424h1v5h-1zM432 427h1v5h-1zM433 426h1v3h-1zM434 425h1v3h-1zM435 426h1v4h-1zM436 425h1v3h-1zM437 426h1v3h-1zM438 425h1v5h-1zM439 426h1v3h-1zM440 426h1v2h-1zM441 425h1v3h-1zM442 426h1v5h-1zM443 425h1v4h-1zM444 425h1v2h-1zM445 426h1v3h-1zM446 426h1v4h-1zM447 425h1v3h-1zM448 426h1v3h-1zM449 425h1v3h-1zM450 425h1v3h-1zM451 426h1v2h-1zM452 426h1v2h-1zM453 426h1v5h-1zM454 426h1v3h-1zM455 425h1v3h-1zM456 426h1v2h-1zM457 426h1v5h-1zM458 425h1v2h-1zM459 427h1v3h-1zM460 426h1v3h-1zM461 425h1v2h-1zM462 426h1v2h-1zM463 426h1v4h-1zM464 426h1v2h-1zM465 425h1v5h-1zM466 424h1v4h-1zM467 425h1v2h-1zM468 426h1v3h-1zM469 427h1v55h-1zM470 455h1v21h-1zM471 445h1v13h-1zM472 64h1v381h-1zM473 325h1v118h-1zM474 422h1v9h-1zM475 424h1v6h-1zM476 425h1v5h-1zM477 427h1v2h-1zM478 426h1v4h-1zM479 426h1v3h-1zM480 425h1v3h-1zM481 425h1v2h-1zM482 426h1v3h-1zM483 424h1v5h-1zM484 425h1v2h-1zM485 426h1v3h-1zM486 426h1v5h-1zM487 426h1v2h-1zM488 426h1v4h-1zM489 426h1v3h-1zM490 427h1v2h-1zM491 426h1v4h-1zM492 427h1v3h-1zM493 427h1v3h-1zM494 427h1v5h-1zM495 427h1v2h-1zM496 426h1v5h-1zM497 426h1v3h-1zM498 426h1v2h-1zM499 426h1v4h-1zM500 426h1v2h-1zM501 425h1v2h-1zM502 426h1v2h-1zM503 425h1v3h-1zM504 424h1v2h-1zM505 425h1v3h-1zM506 426h1v3h-1zM507 425h1v3h-1zM508 425h1v5h-1zM509 425h1v3h-1zM510 425h1v4h-1zM511 425h1v3h-1zM512 425h1v4h-1zM513 427h1v38h-1zM514 438h1v21h-1zM515 428h1v13h-1zM516 188h1v257h-1zM517 188h1v116h-1zM518 262h1v51h-1zM519 310h1v3h-1zM520 310h1v11h-1zM521 320h1v10h-1zM522 329h1v9h-1zM523 337h1v9h-1zM524 345h1v8h-1zM525 352h1v7h-1zM526 358h1v7h-1zM527 364h1v6h-1zM528 369h1v6h-1zM529 374h1v5h-1zM530 378h1v6h-1zM531 383h1v4h-1zM532 386h1v5h-1zM533 390h1v4h-1zM534 393h1v4h-1zM535 396h1v3h-1zM536 398h1v4h-1zM537 401h1v3h-1zM538 403h1v3h-1zM539 405h1v3h-1zM540 407h1v3h-1zM541 409h1v3h-1zM542 410h1v5h-1zM543 411h1v4h-1zM544 412h1v5h-1zM545 412h1v5h-1zM546 414h1v5h-1zM547 417h1v3h-1zM548 415h1v5h-1zM549 417h1v3h-1zM550 417h1v6h-1zM551 420h1v4h-1zM552 419h1v3h-1zM553 421h1v3h-1zM554 422h1v3h-1zM555 420h1v5h-1zM556 421h1v4h-1zM557 422h1v3h-1zM558 427h1v48h-1zM559 448h1v21h-1zM560 438h1v13h-1zM561 339h1v106h-1zM562 405h1v38h-1zM563 422h1v9h-1zM564 424h1v6h-1zM565 425h1v5h-1zM566 427h1v5h-1zM567 428h1v2h-1zM568 427h1v2h-1zM569 425h1v5h-1zM570 427h1v4h-1zM571 425h1v5h-1zM572 427h1v3h-1zM573 427h1v3h-1zM574 426h1v3h-1zM575 425h1v3h-1zM576 426h1v5h-1zM577 425h1v5h-1zM578 426h1v4h-1zM579 427h1v4h-1zM580 427h1v5h-1zM581 427h1v4h-1zM582 428h1v4h-1zM583 427h1v3h-1zM584 427h1v2h-1zM585 426h1v4h-1zM586 428h1v4h-1zM587 428h1v4h-1zM588 428h1v5h-1zM589 428h1v4h-1zM590 426h1v4h-1zM591 426h1v5h-1zM592 426h1v4h-1zM593 427h1v4h-1zM594 427h1v3h-1zM595 428h1v4h-1zM596 428h1v4h-1zM597 429h1v4h-1zM598 427h1v3h-1zM599 428h1v5h-1zM600 428h1v3h-1zM601 428h1v4h-1zM602 427h1v45h-1zM603 445h1v21h-1zM604 435h1v13h-1zM605 144h1v301h-1zM606 360h1v83h-1zM607 422h1v9h-1zM608 424h1v6h-1zM609 425h1v5h-1zM610 427h1v3h-1zM611 428h1v5h-1zM612 427h1v4h-1zM613 426h1v5h-1zM614 428h1v3h-1zM615 428h1v2h-1zM616 427h1v5h-1zM617 427h1v4h-1zM618 426h1v4h-1zM619 426h1v5h-1zM620 426h1v5h-1zM621 427h1v5h-1zM622 426h1v5h-1zM623 425h1v4h-1zM624 426h1v5h-1zM625 427h1v3h-1zM626 427h1v3h-1zM627 428h1v4h-1zM628 427h1v4h-1zM629 427h1v5h-1zM630 426h1v4h-1zM631 427h1v2h-1zM632 427h1v3h-1zM633 428h1v4h-1zM634 427h1v4h-1zM635 427h1v4h-1zM636 426h1v4h-1zM637 426h1v3h-1zM638 427h1v4h-1zM639 426h1v5h-1zM640 428h1v5h-1zM641 427h1v4h-1zM642 426h1v2h-1zM643 427h1v5h-1zM644 427h1v4h-1zM645 427h1v3h-1zM646 427h1v5h-1zM647 428h1v3h-1zM648 427h1v60h-1zM649 460h1v21h-1zM650 450h1v13h-1zM651 86h1v359h-1zM652 334h1v109h-1zM653 422h1v9h-1zM654 424h1v6h-1zM655 425h1v5h-1zM656 429h1v4h-1zM657 429h1v2h-1zM658 429h1v3h-1zM659 428h1v3h-1zM660 428h1v4h-1zM661 428h1v3h-1zM662 429h1v2h-1zM663 428h1v5h-1zM664 429h1v5h-1zM665 428h1v3h-1zM666 429h1v3h-1zM667 429h1v5h-1zM668 428h1v3h-1zM669 429h1v4h-1zM670 429h1v4h-1zM671 428h1v5h-1zM672 430h1v3h-1zM673 429h1v4h-1zM674 428h1v5h-1zM675 428h1v3h-1zM676 428h1v4h-1zM677 427h1v4h-1zM678 428h1v5h-1zM679 428h1v3h-1zM680 427h1v3h-1zM681 428h1v5h-1zM682 428h1v5h-1zM683 428h1v4h-1zM684 428h1v3h-1zM685 428h1v2h-1zM686 429h1v5h-1zM687 429h1v4h-1zM688 430h1v2h-1zM689 429h1v5h-1zM690 427h1v5h-1zM691 428h1v4h-1zM692 428h1v40h-1zM693 441h1v21h-1zM694 431h1v13h-1zM695 159h1v287h-1zM696 350h1v94h-1zM697 423h1v9h-1zM698 425h1v6h-1zM699 426h1v5h-1zM700 426h1v5h-1zM701 428h1v5h-1zM702 428h1v4h-1zM703 428h1v3h-1zM704 426h1v3h-1zM705 428h1v4h-1zM706 427h1v5h-1zM707 428h1v4h-1zM708 427h1v3h-1zM709 427h1v5h-1zM710 426h1v5h-1zM711 426h1v4h-1zM712 427h1v3h-1zM713 428h1v5h-1zM714 428h1v5h-1zM715 427h1v2h-1zM716 427h1v4h-1zM717 426h1v4h-1zM718 427h1v5h-1zM719 427h1v4h-1zM720 427h1v4h-1zM721 427h1v4h-1zM722 427h1v4h-1zM723 427h1v2h-1zM724 428h1v3h-1zM725 428h1v2h-1zM726 426h1v5h-1zM727 426h1v3h-1zM728 427h1v5h-1zM729 427h1v5h-1zM730 427h1v3h-1zM731 428h1v5h-1zM732 429h1v5h-1zM733 428h1v4h-1zM734 429h1v2h-1zM735 428h1v2h-1zM736 428h1v50h-1zM737 451h1v21h-1zM738 441h1v13h-1zM739 64h1v382h-1zM740 342h1v102h-1zM741 423h1v9h-1zM742 425h1v6h-1zM743 426h1v5h-1zM744 429h1v3h-1zM745 428h1v5h-1zM746 427h1v5h-1zM747 428h1v4h-1zM748 428h1v4h-1zM749 427h1v4h-1zM750 428h1v5h-1zM751 427h1v3h-1zM752 427h1v3h-1zM753 427h1v3h-1zM754 428h1v3h-1zM755 429h1v3h-1zM756 429h1v5h-1zM757 428h1v3h-1zM758 429h1v4h-1zM759 429h1v4h-1zM760 429h1v4h-1zM761 429h1v5h-1zM762 428h1v4h-1zM763 428h1v5h-1zM764 428h1v4h-1zM765 428h1v3h-1zM766 428h1v5h-1zM767 428h1v4h-1zM768 428h1v5h-1zM769 428h1v3h-1zM770 427h1v3h-1zM771 428h1v5h-1zM772 427h1v3h-1zM773 427h1v3h-1zM774 426h1v2h-1zM775 427h1v4h-1zM776 427h1v5h-1zM777 426h1v4h-1zM778 427h1v3h-1zM779 428h1v3h-1zM780 429h1v2h-1zM781 428h1v37h-1zM782 438h1v21h-1zM783 428h1v13h-1zM784 307h1v139h-1zM785 363h1v81h-1zM786 423h1v9h-1zM787 425h1v6h-1zM788 426h1v5h-1zM789 429h1v3h-1zM790 428h1v3h-1zM791 426h1v5h-1zM792 428h1v5h-1zM793 428h1v2h-1zM794 427h1v5h-1zM795 427h1v5h-1zM796 427h1v5h-1zM797 428h1v3h-1zM798 428h1v2h-1zM799 427h1v3h-1zM800 427h1v5h-1zM801 428h1v5h-1zM802 428h1v3h-1zM803 430h1v2h-1zM804 430h1v5h-1zM805 429h1v2h-1zM806 430h1v5h-1zM807 427h1v4h-1zM808 429h1v5h-1zM809 428h1v5h-1zM810 428h1v3h-1zM811 429h1v5h-1zM812 428h1v4h-1zM813 429h1v4h-1zM814 429h1v2h-1zM815 428h1v3h-1zM816 429h1v4h-1zM817 428h1v4h-1zM818 426h1v5h-1zM819 428h1v4h-1zM820 428h1v2h-1zM821 428h1v3h-1zM822 428h1v3h-1zM823 428h1v4h-1zM824 428h1v2h-1zM825 429h1v3h-1zM826 428h1v54h-1zM827 455h1v21h-1zM828 445h1v13h-1zM829 307h1v139h-1zM830 336h1v108h-1zM831 423h1v9h-1zM832 425h1v6h-1zM833 426h1v5h-1zM834 427h1v5h-1zM835 427h1v3h-1zM836 428h1v4h-1zM837 426h1v2h-1zM838 428h1v5h-1zM839 427h1v4h-1zM840 429h1v3h-1zM841 429h1v2h-1zM842 428h1v3h-1zM843 429h1v3h-1zM844 428h1v2h-1zM845 428h1v4h-1zM846 427h1v3h-1zM847 428h1v4h-1zM848 427h1v5h-1zM849 427h1v5h-1zM850 428h1v4h-1zM851 427h1v3h-1zM852 429h1v4h-1zM853 429h1v2h-1zM854 427h1v3h-1zM855 429h1v2h-1zM856 427h1v2h-1zM857 427h1v3h-1zM858 427h1v4h-1zM859 427h1v2h-1zM860 426h1v5h-1zM861 426h1v2h-1zM862 427h1v2h-1zM863 426h1v3h-1zM864 427h1v5h-1zM865 427h1v5h-1zM866 426h1v5h-1zM867 427h1v4h-1zM868 427h1v4h-1zM869 428h1v5h-1zM870 428h1v3h-1zM871 428h1v43h-1zM872 444h1v21h-1zM873 434h1v13h-1zM874 154h1v292h-1zM875 364h1v80h-1zM876 423h1v9h-1zM877 425h1v6h-1zM878 426h1v5h-1zM879 428h1v5h-1zM880 429h1v5h-1zM881 427h1v2h-1zM882 429h1v5h-1zM883 428h1v4h-1zM884 427h1v4h-1zM885 427h1v2h-1zM886 427h1v3h-1zM887 427h1v2h-1zM888 428h1v2h-1zM889 428h1v4h-1zM890 428h1v3h-1zM891 428h1v3h-1zM892 427h1v5h-1zM893 428h1v4h-1zM894 429h1v5h-1zM895 428h1v4h-1zM896 429h1v4h-1zM897 429h1v2h-1zM898 428h1v3h-1zM899 428h1v4h-1zM900 428h1v3h-1zM901 429h1v3h-1zM902 429h1v3h-1zM903 429h1v3h-1zM904 427h1v3h-1zM905 428h1v4h-1zM906 428h1v5h-1zM907 427h1v4h-1zM908 428h1v4h-1zM909 428h1v3h-1zM910 428h1v5h-1zM911 428h1v5h-1zM912 429h1v3h-1zM913 430h1v4h-1zM914 429h1v4h-1zM915 429h1v54h-1zM916 456h1v21h-1zM917 446h1v13h-1zM918 64h1v383h-1zM919 345h1v100h-1zM920 424h1v9h-1zM921 426h1v6h-1zM922 427h1v5h-1zM923 429h1v4h-1zM924 429h1v4h-1zM925 429h1v2h-1zM926 429h1v3h-1zM927 430h1v3h-1zM928 429h1v2h-1zM929 428h1v4h-1zM930 429h1v4h-1zM931 429h1v4h-1zM932 430h1v4h-1zM933 429h1v4h-1zM934 430h1v2h-1zM935 430h1v2h-1zM936 429h1v5h-1zM937 429h1v3h-1zM938 430h1v4h-1zM939 430h1v5h-1zM940 429h1v3h-1zM941 429h1v2h-1zM942 430h1v2h-1zM943 430h1v5h-1zM944 429h1v5h-1zM945 429h1v5h-1zM946 429h1v4h-1zM947 427h1v3h-1zM948 427h1v5h-1zM949 427h1v3h-1zM950 428h1v3h-1zM951 428h1v4h-1zM952 427h1v3h-1zM953 427h1v5h-1zM954 428h1v4h-1zM955 427h1v3h-1zM956 426h1v2h-1zM957 427h1v4h-1zM958 427h1v4h-1zM959 426h1v5h-1zM960 429h1v38h-1zM961 440h1v21h-1zM962 430h1v13h-1zM963 201h1v246h-1zM964 369h1v76h-1zM965 424h1v9h-1zM966 426h1v6h-1zM967 427h1v5h-1zM968 427h1v4h-1zM969 428h1v2h-1zM970 429h1v3h-1zM971 429h1v4h-1zM972 429h1v3h-1zM973 430h1v4h-1zM974 429h1v2h-1zM975 430h1v2h-1zM976 429h1v4h-1zM977 428h1v4h-1zM978 428h1v3h-1zM979 429h1v3h-1zM980 428h1v2h-1zM981 428h1v4h-1zM982 428h1v4h-1zM983 428h1v4h-1zM984 426h1v3h-1zM985 428h1v5h-1zM986 428h1v3h-1zM987 428h1v4h-1zM988 428h1v3h-1zM989 428h1v5h-1zM990 428h1v3h-1zM991 429h1v3h-1zM992 430h1v5h-1zM993 430h1v4h-1zM994 431h1v4h-1zM995 431h1v3h-1zM996 430h1v5h-1zM997 431h1v5h-1zM998 431h1v2h-1zM999 431h1v3h-1zM1000 429h1v5h-1zM1001 429h1v3h-1zM1002 427h1v2h-1zM1003 429h1v5h-1zM1004 429h1v3h-1zM1005 429h1v50h-1z"/><path fill="#ffff00" d="M160 564h1v1h-1zM161 564h1v1h-1zM162 564h1v1h-1zM163 564h1v1h-1zM164 564h1v1h-1zM165 564h1v1h-1zM166 564h1v1h-1zM167 564h1v1h-1zM168 564h1v1h-1zM169 564h1v1h-1zM170 564h1v1h-1zM171 564h1v1h-1zM172 564h1v1h-1zM173 564h1v1h-1zM174 564h1v1h-1zM175 564h1v1h-1zM176 564h1v1h-1zM177 564h1v1h-1zM178 564h1v1h-1zM179 564h1v1h-1zM180 564h1v1h-1zM181 564h1v1h-1zM182 564h1v1h-1zM183 564h1v1h-1zM184 564h1v1h-1zM185 564h1v1h-1zM186 564h1v1h-1zM187 564h1v1h-1zM188 564h1v1h-1zM189 564h1v1h-1zM190 564h1v1h-1zM191 564h1v1h-1zM192 564h1v1h-1zM193 564h1v1h-1zM194 564h1v1h-1zM195 564h1v1h-1zM196 564h1v1h-1zM197 564h1v1h-1zM198 564h1v1h-1zM199 564h1v1h-1zM200 564h1v1h-1zM201 564h1v1h-1zM202 564h1v1h-1zM203 552h1v13h-1zM204 559h1v1h-1zM205 559h1v3h-1zM206 561h1v3h-1zM207 564h1v1h-1zM208 564h1v1h-1zM209 564h1v1h-1zM210 564h1v1h-1zM211 564h1v1h-1zM212 564h1v1h-1zM213 564h1v1h-1zM214 564h1v1h-1zM215 564h1v1h-1zM216 564h1v1h-1zM217 564h1v1h-1zM218 564h1v1h-1zM219 564h1v1h-1zM220 564h1v1h-1zM221 564h1v1h-1zM222 564h1v1h-1zM223 564h1v1h-1zM224 564h1v1h-1zM225 564h1v1h-1zM226 564h1v1h-1zM227 564h1v1h-1zM228 564h1v1h-1zM229 564h1v1h-1zM230 564h1v1h-1zM231 564h1v1h-1zM232 564h1v1h-1zM233 564h1v1h-1zM234 564h1v1h-1zM235 564h1v1h-1zM236 564h1v1h-1zM237 564h1v1h-1zM238 564h1v1h-1zM239 564h1v1h-1zM240 564h1v1h-1zM241 564h1v1h-1zM242 564h1v1h-1zM243 564h1v1h-1zM244 564h1v1h-1zM245 564h1v1h-1zM246 564h1v1h-1zM247 564h1v1h-1zM248 562h1v3h-1zM249 563h1v2h-1zM250 564h1v1h-1zM251 564h1v1h-1zM252 564h1v1h-1zM253 564h1v1h-1zM254 564h1v1h-1zM255 564h1v1h-1zM256 564h1v1h-1zM257 564h1v1h-1zM258 564h1v1h-1zM259 564h1v1h-1zM260 564h1v1h-1zM261 564h1v1h-1zM262 564h1v1h-1zM263 564h1v1h-1zM264 564h1v1h-1zM265 564h1v1h-1zM266 564h1v1h-1zM267 564h1v1h-1zM268 564h1v1h-1zM269 564h1v1h-1zM270 564h1v1h-1zM271 564h1v1h-1zM272 564h1v1h-1zM273 564h1v1h-1zM274 564h1v1h-1zM275 564h1v1h-1zM276 564h1v1h-1zM277 564h1v1h-1zM278 564h1v1h-1zM279 564h1v1h-1zM280 564h1v1h-1zM281 564h1v1h-1zM282 564h1v1h-1zM283 564h1v1h-1zM284 564h1v1h-1zM285 564h1v1h-1zM286 564h1v1h-1zM287 564h1v1h-1zM288 564h1v1h-1zM289 564h1v1h-1zM290 564h1v1h-1zM291 564h1v1h-1zM292 564h1v1h-1zM293 564h1v1h-1zM294 510h1v55h-1zM295 540h1v20h-1zM296 559h1v3h-1zM297 561h1v3h-1zM298 564h1v1h-1zM299 564h1v1h-1zM300 564h1v1h-1zM301 564h1v1h-1zM302 564h1v1h-1zM303 564h1v1h-1zM304 564h1v1h-1zM305 564h1v1h-1zM306 564h1v1h-1zM307 564h1v1h-1zM308 564h1v1h-1zM309 564h1v1h-1zM310 564h1v1h-1zM311 564h1v1h-1zM312 564h1v1h-1zM313 564h1v1h-1zM314 564h1v1h-1zM315 564h1v1h-1zM316 564h1v1h-1zM317 564h1v1h-1zM318 564h1v1h-1zM319 564h1v1h-1zM320 564h1v1h-1zM321 564h1v1h-1zM322 564h1v1h-1zM323 564h1v1h-1zM324 564h1v1h-1zM325 564h1v1h-1zM326 564h1v1h-1zM327 564h1v1h-1zM328 564h1v1h-1zM329 564h1v1h-1zM330 564h1v1h-1zM331 564h1v1h-1zM332 564h1v1h-1zM333 564h1v1h-1zM334 564h1v1h-1zM335 564h1v1h-1zM336 564h1v1h-1zM337 564h1v1h-1zM338 564h1v1h-1zM339 564h1v1h-1zM340 564h1v1h-1zM341 564h1v1h-1zM342 564h1v1h-1zM343 564h1v1h-1zM344 564h1v1h-1zM345 564h1v1h-1zM346 564h1v1h-1zM347 564h1v1h-1zM348 564h1v1h-1zM349 564h1v1h-1zM350 564h1v1h-1zM351 564h1v1h-1zM352 564h1v1h-1zM353 564h1v1h-1zM354 564h1v1h-1zM355 564h1v1h-1zM356 564h1v1h-1zM357 564h1v1h-1zM358 564h1v1h-1zM359 564h1v1h-1zM360 564h1v1h-1zM361 564h1v1h-1zM362 564h1v1h-1zM363 564h1v1h-1zM364 564h1v1h-1zM365 564h1v1h-1zM366 564h1v1h-1zM367 564h1v1h-1zM368 564h1v1h-1zM369 564h1v1h-1zM370 564h1v1h-1zM371 564h1v1h-1zM372 564h1v1h-1zM373 564h1v1h-1zM374 564h1v1h-1zM375 564h1v1h-1zM376 564h1v1h-1zM377 564h1v1h-1zM378 564h1v1h-1zM379 564h1v1h-1zM380 564h1v1h-1zM381 564h1v1h-1zM382 564h1v1h-1zM383 554h1v11h-1zM384 560h1v1h-1zM385 559h1v3h-1zM386 561h1v3h-1zM387 564h1v1h-1zM388 564h1v1h-1zM389 564h1v1h-1zM390 564h1v1h-1zM391 564h1v1h-1zM392 564h1v1h-1zM393 564h1v1h-1zM394 564h1v1h-1zM395 564h1v1h-1zM396 564h1v1h-1zM397 564h1v1h-1zM398 564h1v1h-1zM399 564h1v1h-1zM400 564h1v1h-1zM401 564h1v1h-1zM402 564h1v1h-1zM403 564h1v1h-1zM404 564h1v1h-1zM405 564h1v1h-1zM406 564h1v1h-1zM407 564h1v1h-1zM408 564h1v1h-1zM409 564h1v1h-1zM410 564h1v1h-1zM411 564h1v1h-1zM412 564h1v1h-1zM413 564h1v1h-1zM414 564h1v1h-1zM415 564h1v1h-1zM416 564h1v1h-1zM417 564h1v1h-1zM418 564h1v1h-1zM419 564h1v1h-1zM420 564h1v1h-1zM421 564h1v1h-1zM422 564h1v1h-1zM423 564h1v1h-1zM424 564h1v1h-1zM425 564h1v1h-1zM426 564h1v1h-1zM427 562h1v3h-1zM428 563h1v2h-1zM429 564h1v1h-1zM430 564h1v1h-1zM431 564h1v1h-1zM432 564h1v1h-1zM433 564h1v1h-1zM434 564h1v1h-1zM435 564h1v1h-1zM436 564h1v1h-1zM437 564h1v1h-1zM438 564h1v1h-1zM439 564h1v1h-1zM440 564h1v1h-1zM441 564h1v1h-1zM442 564h1v1h-1zM443 564h1v1h-1zM444 564h1v1h-1zM445 564h1v1h-1zM446 564h1v1h-1zM447 564h1v1h-1zM448 564h1v1h-1zM449 564h1v1h-1zM450 564h1v1h-1zM451 564h1v1h-1zM452 564h1v1h-1zM453 564h1v1h-1zM454 564h1v1h-1zM455 564h1v1h-1zM456 564h1v1h-1zM457 564h1v1h-1zM458 564h1v1h-1zM459 564h1v1h-1zM460 564h1v1h-1zM461 564h1v1h-1zM462 564h1v1h-1zM463 564h1v1h-1zM464 564h1v1h-1zM465 564h1v1h-1zM466 564h1v1h-1zM467 564h1v1h-1zM468 564h1v1h-1zM469 564h1v1h-1zM470 564h1v1h-1zM471 564h1v1h-1zM472 510h1v55h-1zM473 540h1v20h-1zM474 559h1v3h-1zM475 561h1v3h-1zM476 564h1v1h-1zM477 564h1v1h-1zM478 564h1v1h-1zM479 564h1v1h-1zM480 564h1v1h-1zM481 564h1v1h-1zM482 564h1v1h-1zM483 564h1v1h-1zM484 564h1v1h-1zM485 564h1v1h-1zM486 564h1v1h-1zM487 564h1v1h-1zM488 564h1v1h-1zM489 564h1v1h-1zM490 564h1v1h-1zM491 564h1v1h-1zM492 564h1v1h-1zM493 564h1v1h-1zM494 564h1v1h-1zM495 564h1v1h-1zM496 564h1v1h-1zM497 564h1v1h-1zM498 564h1v1h-1zM499 564h1v1h-1zM500 564h1v1h-1zM501 564h1v1h-1zM502 564h1v1h-1zM503 564h1v1h-1zM504 564h1v1h-1zM505 564h1v1h-1zM506 564h1v1h-1zM507 564h1v1h-1zM508 564h1v1h-1zM509 564h1v1h-1zM510 564h1v1h-1zM511 564h1v1h-1zM512 564h1v1h-1zM513 564h1v1h-1zM514 564h1v1h-1zM515 564h1v1h-1zM516 564h1v1h-1zM517 564h1v1h-1zM518 564h1v1h-1zM519 564h1v1h-1zM520 564h1v1h-1zM521 564h1v1h-1zM522 564h1v1h-1zM523 564h1v1h-1zM524 564h1v1h-1zM525 564h1v1h-1zM526 564h1v1h-1zM527 564h1v1h-1zM528 564h1v1h-1zM529 564h1v1h-1zM530 564h1v1h-1zM531 564h1v1h-1zM532 564h1v1h-1zM533 564h1v1h-1zM534 564h1v1h-1zM535 564h1v1h-1zM536 564h1v1h-1zM537 564h1v1h-1zM538 564h1v1h-1zM539 564h1v1h-1zM540 564h1v1h-1zM541 564h1v1h-1zM542 564h1v1h-1zM543 564h1v1h-1zM544 564h1v1h-1zM545 564h1v1h-1zM546 564h1v1h-1zM547 564h1v1h-1zM548 564h1v1h-1zM549 564h1v1h-1zM550 564h1v1h-1zM551 564h1v1h-1zM552 564h1v1h-1zM553 564h1v1h-1zM554 564h1v1h-1zM555 564h1v1h-1zM556 564h1v1h-1zM557 564h1v1h-1zM558 564h1v1h-1zM559 564h1v1h-1zM560 564h1v1h-1zM561 553h1v12h-1zM562 559h1v1h-1zM563 559h1v3h-1zM564 561h1v3h-1zM565 564h1v1h-1zM566 564h1v1h-1zM567 564h1v1h-1zM568 564h1v1h-1zM569 564h1v1h-1zM570 564h1v1h-1zM571 564h1v1h-1zM572 564h1v1h-1zM573 564h1v1h-1zM574 564h1v1h-1zM575 564h1v1h-1zM576 564h1v1h-1zM577 564h1v1h-1zM578 564h1v1h-1zM579 564h1v1h-1zM580 564h1v1h-1zM581 564h1v1h-1zM582 564h1v1h-1zM583 564h1v1h-1zM584 564h1v1h-1zM585 564h1v1h-1zM586 564h1v1h-1zM587 564h1v1h-1zM588 564h1v1h-1zM589 564h1v1h-1zM590 564h1v1h-1zM591 564h1v1h-1zM592 564h1v1h-1zM593 564h1v1h-1zM594 564h1v1h-1zM595 564h1v1h-1zM596 564h1v1h-1zM597 564h1v1h-1zM598 564h1v1h-1zM599 564h1v1h-1zM600 564h1v1h-1zM601 564h1v1h-1zM602 564h1v1h-1zM603 564h1v1h-1zM604 564h1v1h-1zM605 562h1v3h-1zM606 563h1v2h-1zM607 564h1v1h-1zM608 564h1v1h-1zM609 564h1v1h-1zM610 564h1v1h-1zM611 564h1v1h-1zM612 564h1v1h-1zM613 564h1v1h-1zM614 564h1v1h-1zM615 564h1v1h-1zM616 564h1v1h-1zM617 564h1v1h-1zM618 564h1v1h-1zM619 564h1v1h-1zM620 564h1v1h-1zM621 564h1v1h-1zM622 564h1v1h-1zM623 564h1v1h-1zM624 564h1v1h-1zM625 564h1v1h-1zM626 564h1v1h-1zM627 564h1v1h-1zM628 564h1v1h-1zM629 564h1v1h-1zM630 564h1v1h-1zM631 564h1v1h-1zM632 564h1v1h-1zM633 564h1v1h-1zM634 564h1v1h-1zM635 564h1v1h-1zM636 564h1v1h-1zM637 564h1v1h-1zM638 564h1v1h-1zM639 564h1v1h-1zM640 564h1v1h-1zM641 564h1v1h-1zM642 564h1v1h-1zM643 564h1v1h-1zM644 564h1v1h-1zM645 564h1v1h-1zM646 564h1v1h-1zM647 564h1v1h-1zM648 564h1v1h-1zM649 564h1v1h-1zM650 564h1v1h-1zM651 510h1v55h-1zM652 540h1v20h-1zM653 559h1v3h-1zM654 561h1v3h-1zM655 564h1v1h-1zM656 564h1v1h-1zM657 564h1v1h-1zM658 564h1v1h-1zM659 564h1v1h-1zM660 564h1v1h-1zM661 564h1v1h-1zM662 564h1v1h-1zM663 564h1v1h-1zM664 564h1v1h-1zM665 564h1v1h-1zM666 564h1v1h-1zM667 564h1v1h-1zM668 564h1v1h-1zM669 564h1v1h-1zM670 564h1v1h-1zM671 564h1v1h-1zM672 564h1v1h-1zM673 564h1v1h-1zM674 564h1v1h-1zM675 564h1v1h-1zM676 564h1v1h-1zM677 564h1v1h-1zM678 564h1v1h-1zM679 564h1v1h-1zM680 564h1v1h-1zM681 564h1v1h-1zM682 564h1v1h-1zM683 564h1v1h-1zM684 564h1v1h-1zM685 564h1v1h-1zM686 564h1v1h-1zM687 564h1v1h-1zM688 564h1v1h-1zM689 564h1v1h-1zM690 564h1v1h-1zM691 564h1v1h-1zM692 564h1v1h-1zM693 564h1v1h-1zM694 564h1v1h-1zM695 564h1v1h-1zM696 564h1v1h-1zM697 564h1v1h-1zM698 564h1v1h-1zM699 564h1v1h-1zM700 564h1v1h-1zM701 564h1v1h-1zM702 564h1v1h-1zM703 564h1v1h-1zM704 564h1v1h-1zM705 564h1v1h-1zM706 564h1v1h-1zM707 564h1v1h-1zM708 564h1v1h-1zM709 564h1v1h-1zM710 564h1v1h-1zM711 564h1v1h-1zM712 564h1v1h-1zM713 564h1v1h-1zM714 564h1v1h-1zM715 564h1v1h-1zM716 564h1v1h-1zM717 564h1v1h-1zM718 564h1v1h-1zM719 564h1v1h-1zM720 564h1v1h-1zM721 564h1v1h-1zM722 564h1v1h-1zM723 564h1v1h-1zM724 564h1v1h-1zM725 564h1v1h-1zM726 564h1v1h-1zM727 564h1v1h-1zM728 564h1v1h-1zM729 564h1v1h-1zM730 564h1v1h-1zM731 564h1v1h-1zM732 564h1v1h-1zM733 564h1v1h-1zM734 564h1v1h-1zM735 564h1v1h-1zM736 564h1v1h-1zM737 564h1v1h-1zM738 564h1v1h-1zM739 553h1v12h-1zM740 559h1v1h-1zM741 559h1v3h-1zM742 561h1v3h-1zM743 564h1v1h-1zM744 564h1v1h-1zM745 564h1v1h-1zM746 564h1v1h-1zM747 564h1v1h-1zM748 564h1v1h-1zM749 564h1v1h-1zM750 564h1v1h-1zM751 564h1v1h-1zM752 564h1v1h-1zM753 564h1v1h-1zM754 564h1v1h-1zM755 564h1v1h-1zM756 564h1v1h-1zM757 564h1v1h-1zM758 564h1v1h-1zM759 564h1v1h-1zM760 564h1v1h-1zM761 564h1v1h-1zM762 564h1v1h-1zM763 564h1v1h-1zM764 564h1v1h-1zM765 564h1v1h-1zM766 564h1v1h-1zM767 564h1v1h-1zM768 564h1v1h-1zM769 564h1v1h-1zM770 564h1v1h-1zM771 564h1v1h-1zM772 564h1v1h-1zM773 564h1v1h-1zM774 564h1v1h-1zM775 564h1v1h-1zM776 564h1v1h-1zM777 564h1v1h-1zM778 564h1v1h-1zM779 564h1v1h-1zM780 564h1v1h-1zM781 564h1v1h-1zM782 564h1v1h-1zM783 564h1v1h-1zM784 562h1v3h-1zM785 563h1v2h-1zM786 564h1v1h-1zM787 564h1v1h-1zM788 564h1v1h-1zM789 564h1v1h-1zM790 564h1v1h-1zM791 564h1v1h-1zM792 564h1v1h-1zM793 564h1v1h-1zM794 564h1v1h-1zM795 564h1v1h-1zM796 564h1v1h-1zM797 564h1v1h-1zM798 564h1v1h-1zM799 564h1v1h-1zM800 564h1v1h-1zM801 564h1v1h-1zM802 564h1v1h-1zM803 564h1v1h-1zM804 564h1v1h-1zM805 564h1v1h-1zM806 564h1v1h-1zM807 564h1v1h-1zM808 564h1v1h-1zM809 564h1v1h-1zM810 564h1v1h-1zM811 564h1v1h-1zM812 564h1v1h-1zM813 564h1v1h-1zM814 564h1v1h-1zM815 564h1v1h-1zM816 564h1v1h-1zM817 564h1v1h-1zM818 564h1v1h-1zM819 564h1v1h-1zM820 564h1v1h-1zM821 564h1v1h-1zM822 564h1v1h-1zM823 564h1v1h-1zM824 564h1v1h-1zM825 564h1v1h-1zM826 564h1v1h-1zM827 564h1v1h-1zM828 564h1v1h-1zM829 528h1v37h-1zM830 548h1v12h-1zM831 559h1v3h-1zM832 561h1v3h-1zM833 564h1v1h-1zM834 564h1v1h-1zM835 564h1v1h-1zM836 564h1v1h-1zM837 564h1v1h-1zM838 564h1v1h-1zM839 564h1v1h-1zM840 564h1v1h-1zM841 564h1v1h-1zM842 564h1v1h-1zM843 564h1v1h-1zM844 564h1v1h-1zM845 564h1v1h-1zM846 564h1v1h-1zM847 564h1v1h-1zM848 564h1v1h-1zM849 564h1v1h-1zM850 564h1v1h-1zM851 564h1v1h-1zM852 564h1v1h-1zM853 564h1v1h-1zM854 564h1v1h-1zM855 564h1v1h-1zM856 564h1v1h-1zM857 564h1v1h-1zM858 564h1v1h-1zM859 564h1v1h-1zM860 564h1v1h-1zM861 564h1v1h-1zM862 564h1v1h-1zM863 564h1v1h-1zM864 564h1v1h-1zM865 564h1v1h-1zM866 564h1v1h-1zM867 564h1v1h-1zM868 564h1v1h-1zM869 564h1v1h-1zM870 564h1v1h-1zM871 564h1v1h-1zM872 564h1v1h-1zM873 564h1v1h-1zM874 564h1v1h-1zM875 564h1v1h-1zM876 564h1v1h-1zM877 564h1v1h-1zM878 564h1v1h-1zM879 564h1v1h-1zM880 564h1v1h-1zM881 564h1v1h-1zM882 564h1v1h-1zM883 564h1v1h-1zM884 564h1v1h-1zM885 564h1v1h-1zM886 564h1v1h-1zM887 564h1v1h-1zM888 564h1v1h-1zM889 564h1v1h-1zM890 564h1v1h-1zM891 564h1v1h-1zM892 564h1v1h-1zM893 564h1v1h-1zM894 564h1v1h-1zM895 564h1v1h-1zM896 564h1v1h-1zM897 564h1v1h-1zM898 564h1v1h-1zM899 564h1v1h-1zM900 564h1v1h-1zM901 564h1v1h-1zM902 564h1v1h-1zM903 564h1v1h-1zM904 564h1v1h-1zM905 564h1v1h-1zM906 564h1v1h-1zM907 564h1v1h-1zM908 564h1v1h-1zM909 564h1v1h-1zM910 564h1v1h-1zM911 564h1v1h-1zM912 564h1v1h-1zM913 564h1v1h-1zM914 564h1v1h-1zM915 564h1v1h-1zM916 564h1v1h-1zM917 564h1v1h-1zM918 554h1v11h-1zM919 560h1v1h-1zM920 559h1v3h-1zM921 561h1v3h-1zM922 564h1v1h-1zM923 564h1v1h-1zM924 564h1v1h-1zM925 564h1v1h-1zM926 564h1v1h-1zM927 564h1v1h-1zM928 564h1v1h-1zM929 564h1v1h-1zM930 564h1v1h-1zM931 564h1v1h-1zM932 564h1v1h-1zM933 564h1v1h-1zM934 564h1v1h-1zM935 564h1v1h-1zM936 564h1v1h-1zM937 564h1v1h-1zM938 564h1v1h-1zM939 564h1v1h-1zM940 564h1v1h-1zM941 564h1v1h-1zM942 564h1v1h-1zM943 564h1v1h-1zM944 564h1v1h-1zM945 564h1v1h-1zM946 564h1v1h-1zM947 564h1v1h-1zM948 564h1v1h-1zM949 564h1v1h-1zM950 564h1v1h-1zM951 564h1v1h-1zM952 564h1v1h-1zM953 564h1v1h-1zM954 564h1v1h-1zM955 564h1v1h-1zM956 564h1v1h-1zM957 564h1v1h-1zM958 564h1v1h-1zM959 564h1v1h-1zM960 564h1v1h-1zM961 564h1v1h-1zM962 564h1v1h-1zM963 562h1v3h-1zM964 563h1v2h-1zM965 564h1v1h-1zM966 564h1v1h-1zM967 564h1v1h-1zM968 564h1v1h-1zM969 564h1v1h-1zM970 564h1v1h-1zM971 564h1v1h-1zM972 564h1v1h-1zM973 564h1v1h-1zM974 564h1v1h-1zM975 564h1v1h-1zM976 564h1v1h-1zM977 564h1v1h-1zM978 564h1v1h-1zM979 564h1v1h-1zM980 564h1v1h-1zM981 564h1v1h-1zM982 564h1v1h-1zM983 564h1v1h-1zM984 564h1v1h-1zM985 564h1v1h-1zM986 564h1v1h-1zM987 564h1v1h-1zM988 564h1v1h-1zM989 564h1v1h-1zM990 564h1v1h-1zM991 564h1v1h-1zM992 564h1v1h-1zM993 564h1v1h-1zM994 564h1v1h-1zM995 564h1v1h-1zM996 564h1v1h-1zM997 564h1v1h-1zM998 564h1v1h-1zM999 564h1v1h-1zM1000 564h1v1h-1zM1001 564h1v1h-1zM1002 564h1v1h-1zM1003 564h1v1h-1zM1004 564h1v1h-1zM1005 564h1v1h-1z"/><path fill="#80ffff" d="M141 422h2v1h-2zM139 423h4v1h-4zM141 424h2v1h-2zM141 425h2v1h-2zM141 426h2v1h-2zM141 427h2v1h-2zM141 428h2v1h-2zM141 429h2v1h-2zM141 430h2v1h-2zM141 431h2v1h-2z"/><path fill="#80ffff" d="M149 424h2v1h-2zM149 425h4v1h-4zM149 426h6v1h-6zM146 427h12v1h-12zM149 428h6v1h-6zM149 429h4v1h-4zM149 430h2v1h-2z"/><path fill="#ffff00" d="M140 559h4v1h-4zM139 560h2v1h-2zM143 560h2v1h-2zM139 561h2v1h-2zM143 561h2v1h-2zM143 562h2v1h-2zM142 563h2v1h-2zM141 564h2v1h-2zM140 565h2v1h-2zM139 566h2v1h-2zM139 567h2v1h-2zM139 568h6v1h-6z"/><path fill="#ffff00" d="M149 561h2v1h-2zM149 562h4v1h-4zM149 563h6v1h-6zM146 564h12v1h-12zM149 565h6v1h-6zM149 566h4v1h-4zM149 567h2v1h-2z"/></svg><div class="a dith" style="left:1006px;top:64px;width:16px;height:638px"></div><div class="a rz" style="left:1006px;top:64px;width:16px;height:16px"></div><div class="a rz" style="left:1006px;top:383px;width:16px;height:13px"></div><div class="a rz" style="left:1006px;top:686px;width:16px;height:16px"></div><div class="a" style="left:1006px;top:702px;width:16px;height:16px;background:#d4d0c8"></div><div class="a dith" style="left:136px;top:702px;width:870px;height:16px"></div><div class="a rz" style="left:136px;top:702px;width:16px;height:16px"></div><div class="a rz" style="left:153px;top:702px;width:192px;height:16px"></div><div class="a rz" style="left:990px;top:702px;width:16px;height:16px"></div><svg class="a" style="left:0;top:0" width="1024" height="768" shape-rendering="crispEdges"><path fill="#000" d="M1010 73h7v1h-7z M1011 72h5v1h-5z M1012 71h3v1h-3z M1013 70h1v1h-1zM1010 692h7v1h-7z M1011 693h5v1h-5z M1012 694h3v1h-3z M1013 695h1v1h-1zM141 709h1v1h-1z M142 708h1v3h-1z M143 707h1v5h-1z M144 706h1v7h-1zM999 709h1v1h-1z M998 708h1v3h-1z M997 707h1v5h-1z M996 706h1v7h-1z"/></svg><div class="t" style="left:1px;top:724px;letter-spacing:0.9px">Готов...</div><div class="a sk" style="left:662px;top:722px;width:320px;height:16px"></div><div class="t" style="left:664px;top:724px;letter-spacing:0.09px">Полн. время: 00:00:02:215.088, Тек. время: 00:00:00:004.000</div><div class="a sk" style="left:984px;top:722px;width:40px;height:16px"></div><div class="t" style="left:985px;top:724px">6.21</div><div class="a" style="left:0;top:739px;width:1024px;height:1px;background:#fff"></div><div class="a rz" style="left:2px;top:742px;width:52px;height:22px"></div><svg class="a" style="left:3px;top:744px" width="18" height="18"><defs><linearGradient id="lo" x1="0" y1="0" x2="0" y2="1"><stop offset="0" stop-color="#ff9a40"/><stop offset="1" stop-color="#e8501a"/></linearGradient><linearGradient id="lg" x1="0" y1="0" x2="0" y2="1"><stop offset="0" stop-color="#b0e040"/><stop offset="1" stop-color="#50a010"/></linearGradient><linearGradient id="lb" x1="0" y1="0" x2="0" y2="1"><stop offset="0" stop-color="#60b0ff"/><stop offset="1" stop-color="#2060d0"/></linearGradient><linearGradient id="ly" x1="0" y1="0" x2="0" y2="1"><stop offset="0" stop-color="#ffe040"/><stop offset="1" stop-color="#e0a000"/></linearGradient></defs><path d="M4 3Q7 1 10 2L9 8Q6 7 3 9Z" fill="url(#lo)"/><path d="M11 2Q14 1 17 3L16 9Q13 7 10 8Z" fill="url(#lg)"/><path d="M3 10Q6 8 9 9L8 15Q5 14 2 16Z" fill="url(#lb)"/><path d="M10 9Q13 8 16 10L15 16Q12 14 9 15Z" fill="url(#ly)"/></svg><div class="t" style="left:22px;top:748px;font-weight:bold;font-size:12px">Пуск</div><div class="a rz" style="left:58px;top:742px;width:160px;height:22px"></div><svg class="a" style="left:61px;top:744px" width="18" height="18"><defs><linearGradient id="op" x1="0" y1="0" x2="1" y2="0"><stop offset="0" stop-color="#a00000"/><stop offset="0.5" stop-color="#ff3030"/><stop offset="1" stop-color="#900000"/></linearGradient></defs><ellipse cx="7" cy="11" rx="6" ry="3.5" fill="#8a8a8a" opacity="0.8"/><ellipse cx="10" cy="8.5" rx="5" ry="7.3" fill="url(#op)"/><ellipse cx="10" cy="8.5" rx="2" ry="5.3" fill="#f0d8d8"/></svg><div class="t" style="left:81px;top:747px;font-size:11.5px">www.chipsoft.ru :: Прос...</div><div class="a rz" style="left:221px;top:742px;width:160px;height:22px"></div><svg class="a" style="left:225px;top:744px" width="16" height="18"><path d="M1 2h8l5 2v13l-5-1H1z" fill="#e0b848"/><path d="M2 3h6l1 1v12H2z" fill="#f8e8a0"/><path d="M9 4l4 1v11l-4-1z" fill="#f0d070"/><rect x="12" y="10" width="1" height="3" fill="#3080e0"/></svg><div class="t" style="left:244px;top:748px;letter-spacing:0.3px">зажигание</div><div class="a dith" style="left:384px;top:742px;width:160px;height:22px;box-shadow:inset 1px 1px #404040,inset -1px -1px #fff,inset 2px 2px #808080"></div><svg class="a" style="left:0;top:0" width="420" height="768" shape-rendering="crispEdges"><path fill="#c8c8c8" d="M389 746h16v1h-16zM389 747h1v1h-1zM389 748h1v1h-1zM403 748h1v1h-1zM389 749h1v1h-1zM403 749h1v1h-1zM389 750h1v1h-1zM403 750h1v1h-1zM389 751h1v1h-1zM403 751h1v1h-1zM389 752h1v1h-1zM403 752h1v1h-1zM389 753h1v1h-1zM403 753h1v1h-1zM389 754h1v1h-1zM403 754h1v1h-1zM389 755h1v1h-1zM403 755h1v1h-1zM389 756h1v1h-1zM403 756h1v1h-1zM389 757h1v1h-1zM403 757h1v1h-1zM389 758h1v1h-1zM403 758h1v1h-1zM389 759h1v1h-1zM403 759h1v1h-1zM389 760h1v1h-1zM391 760h13v1h-13zM389 761h1v1h-1z"/><path fill="#000" d="M390 747h15v1h-15zM390 748h1v1h-1zM404 748h1v1h-1zM390 749h1v1h-1zM404 749h1v1h-1zM390 750h1v1h-1zM404 750h1v1h-1zM390 751h1v1h-1zM404 751h1v1h-1zM390 752h1v1h-1zM404 752h1v1h-1zM390 753h1v1h-1zM404 753h1v1h-1zM390 754h1v1h-1zM404 754h1v1h-1zM390 755h1v1h-1zM404 755h1v1h-1zM390 756h1v1h-1zM404 756h1v1h-1zM390 757h1v1h-1zM404 757h1v1h-1zM390 758h1v1h-1zM404 758h1v1h-1zM390 759h1v1h-1zM404 759h1v1h-1zM390 760h1v1h-1zM404 760h1v1h-1zM390 761h15v1h-15z"/><path fill="#008000" d="M391 748h12v1h-12zM391 749h1v1h-1zM394 749h5v1h-5zM401 749h2v1h-2zM391 750h1v1h-1zM394 750h5v1h-5zM401 750h2v1h-2zM394 751h5v1h-5zM402 751h1v1h-1zM391 752h2v1h-2zM399 752h2v1h-2zM391 753h12v1h-12zM391 754h12v1h-12zM391 755h1v1h-1zM394 755h2v1h-2zM398 755h1v1h-1zM401 755h1v1h-1zM391 756h1v1h-1zM394 756h2v1h-2zM398 756h1v1h-1zM401 756h1v1h-1zM395 757h1v1h-1zM399 757h1v1h-1zM391 759h12v1h-12z"/><path fill="#00ff00" d="M392 749h2v1h-2zM399 749h2v1h-2zM392 750h2v1h-2zM399 750h2v1h-2zM391 751h3v1h-3zM399 751h3v1h-3zM393 752h6v1h-6zM401 752h2v1h-2zM392 755h2v1h-2zM396 755h2v1h-2zM399 755h2v1h-2zM402 755h1v1h-1zM392 756h2v1h-2zM396 756h2v1h-2zM399 756h2v1h-2zM402 756h1v1h-1zM391 757h4v1h-4zM396 757h3v1h-3zM400 757h3v1h-3zM391 758h12v1h-12z"/></svg><div class="t" style="left:408px;top:748px;font-weight:bold">USB Осциллограф - С...</div><div class="a" style="left:929px;top:746px;width:12px;height:15px;background:#0a246a"></div><div class="t" style="left:929px;top:747px;color:#fff;letter-spacing:-1px">RL</div><div class="a sk" style="left:945px;top:742px;width:77px;height:24px"></div><div class="t" style="left:950px;top:746px;font-weight:bold;font-size:13px">«</div><svg class="a" style="left:962px;top:745px" width="18" height="17"><defs><linearGradient id="mn" x1="0" y1="0" x2="1" y2="1"><stop offset="0" stop-color="#c8c8c8"/><stop offset="1" stop-color="#505050"/></linearGradient></defs><rect x="6" y="1" width="10" height="9" fill="url(#mn)"/><rect x="1" y="5" width="10" height="9" fill="url(#mn)"/><rect x="4" y="14" width="5" height="1" fill="#606060"/><rect x="3" y="15" width="7" height="1" fill="#909090"/></svg><div class="t" style="left:986px;top:747px">23:48</div></body></html>
